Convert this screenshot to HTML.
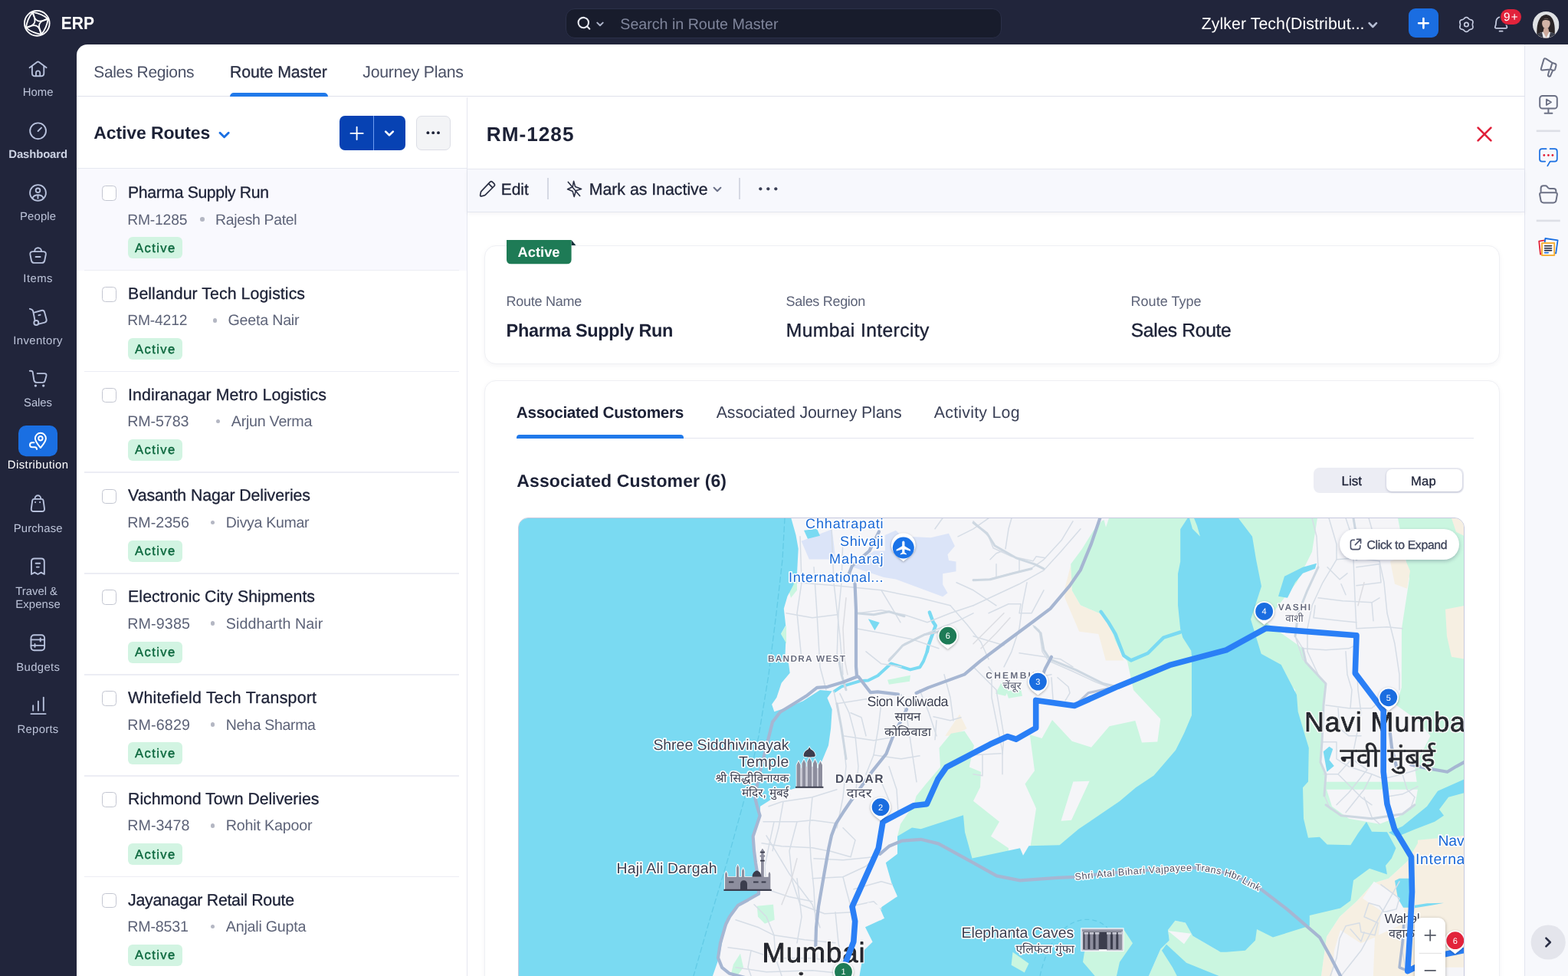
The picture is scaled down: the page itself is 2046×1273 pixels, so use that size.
<!DOCTYPE html>
<html lang="en"><head><meta charset="utf-8"><title>Route Master - ERP</title>
<style>
*{box-sizing:border-box;margin:0;padding:0}
html,body{width:2046px;height:1273px;overflow:hidden;background:#21253b}
body{position:relative;font-family:"Liberation Sans","Noto Sans CJK SC",sans-serif;-webkit-font-smoothing:antialiased}
.t{position:absolute;white-space:nowrap;line-height:1;display:block}
.a{position:absolute;display:block}
svg{position:absolute;display:block;overflow:visible}
.ic{fill:none;stroke:#b7c1dc;stroke-width:1.9;stroke-linecap:round;stroke-linejoin:round}
.ri{fill:none;stroke:#6c7185;stroke-width:2;stroke-linecap:round;stroke-linejoin:round}
.sep{position:absolute;height:1.8px;background:#ecedf4;left:109.8px;width:489.2px}
.cb{position:absolute;left:132.5px;width:19.5px;height:19.5px;border:1.5px solid #c3c6d1;border-radius:4.5px;background:#fff}
.bd{position:absolute;left:167px;width:70.5px;height:28.2px;border-radius:6px;background:#d2f4e2}
.dot{position:absolute;width:5.6px;height:5.6px;border-radius:50%;background:#b4b7c3}
</style></head>
<body>
<div class="a" style="left:99.6px;top:58px;width:1889.9px;height:1215px;background:#fff;border-top-left-radius:14px"></div>
<div class="a" style="left:1989px;top:58px;width:57px;height:1215px;background:#f7f8fc;border-left:1.5px solid #e3e5ef"></div>
<!-- top bar -->
<svg style="left:31px;top:12.5px" width="35" height="35" viewBox="31 12.5 35 35"><g fill="none" stroke="#fff" stroke-width="1.85" stroke-linecap="round">
<circle cx="48.3" cy="29.85" r="16.35"/>
<path d="M42.5 15.4 Q54.6 17.2 62.6 24.1 M42.5 15.4 C45.6 28.4 50.5 29.5 62.6 24.1"/>
<path transform="rotate(90 48.3 29.85)" d="M42.5 15.4 Q54.6 17.2 62.6 24.1 M42.5 15.4 C45.6 28.4 50.5 29.5 62.6 24.1"/>
<path transform="rotate(180 48.3 29.85)" d="M42.5 15.4 Q54.6 17.2 62.6 24.1 M42.5 15.4 C45.6 28.4 50.5 29.5 62.6 24.1"/>
<path transform="rotate(270 48.3 29.85)" d="M42.5 15.4 Q54.6 17.2 62.6 24.1 M42.5 15.4 C45.6 28.4 50.5 29.5 62.6 24.1"/>
</g></svg>

<div class="a" style="left:738px;top:10.5px;width:568.5px;height:39.5px;border-radius:12px;background:#181c2c;border:1px solid #2b3049"></div>
<svg style="left:751px;top:19px" width="40" height="24" viewBox="0 0 40 24"><g fill="none" stroke="#e8eaf2" stroke-width="2.1" stroke-linecap="round" stroke-linejoin="round">
<circle cx="10.3" cy="10.6" r="6.7"/><path d="M15.2 15.6 L18.3 18.7"/></g>
<path d="M28.3 10.6 L32 14.2 L35.7 10.6" fill="none" stroke="#aeb5cb" stroke-width="2" stroke-linecap="round" stroke-linejoin="round"/></svg>


<svg style="left:1784px;top:27px" width="15" height="12" viewBox="0 0 15 12"><path d="M2.6 3.2 L7.3 8 L12 3.2" fill="none" stroke="#b5bdd3" stroke-width="2.6" stroke-linecap="round" stroke-linejoin="round"/></svg>
<div class="a" style="left:1838px;top:10.5px;width:38.5px;height:38.5px;border-radius:9px;background:#1a6de1"></div>
<svg style="left:1838px;top:10.5px" width="38.5" height="38.5" viewBox="0 0 38.5 38.5"><path d="M19.4 13 V25.6 M13.1 19.3 H25.7" fill="none" stroke="#fff" stroke-width="2.6" stroke-linecap="round"/></svg>
<svg style="left:1900px;top:19px" width="27" height="27" viewBox="0 0 27 27"><g fill="none" stroke="#c5cbe0" stroke-width="1.7" stroke-linejoin="round">
<path d="M13.40 3.55 L13.89 3.60 L14.37 3.74 L14.83 3.97 L15.26 4.26 L15.65 4.60 L16.02 4.95 L16.36 5.29 L16.69 5.61 L17.03 5.88 L17.38 6.12 L17.75 6.30 L18.16 6.45 L18.60 6.58 L19.07 6.71 L19.55 6.85 L20.04 7.02 L20.50 7.25 L20.93 7.53 L21.29 7.87 L21.58 8.28 L21.79 8.73 L21.90 9.21 L21.93 9.72 L21.89 10.24 L21.80 10.75 L21.68 11.24 L21.56 11.71 L21.45 12.15 L21.38 12.58 L21.35 13.00 L21.38 13.42 L21.45 13.85 L21.56 14.29 L21.68 14.76 L21.80 15.25 L21.89 15.76 L21.93 16.28 L21.90 16.79 L21.79 17.27 L21.58 17.72 L21.29 18.13 L20.93 18.47 L20.50 18.75 L20.04 18.98 L19.55 19.15 L19.07 19.29 L18.60 19.42 L18.16 19.55 L17.75 19.70 L17.38 19.88 L17.03 20.12 L16.69 20.39 L16.36 20.71 L16.02 21.05 L15.65 21.40 L15.26 21.74 L14.83 22.03 L14.37 22.26 L13.89 22.40 L13.40 22.45 L12.91 22.40 L12.43 22.26 L11.97 22.03 L11.54 21.74 L11.15 21.40 L10.78 21.05 L10.44 20.71 L10.11 20.39 L9.77 20.12 L9.43 19.88 L9.05 19.70 L8.64 19.55 L8.20 19.42 L7.73 19.29 L7.25 19.15 L6.76 18.98 L6.30 18.75 L5.87 18.47 L5.51 18.13 L5.22 17.73 L5.01 17.27 L4.90 16.79 L4.87 16.28 L4.91 15.76 L5.00 15.25 L5.12 14.76 L5.24 14.29 L5.35 13.85 L5.42 13.42 L5.45 13.00 L5.42 12.58 L5.35 12.15 L5.24 11.71 L5.12 11.24 L5.00 10.75 L4.91 10.24 L4.87 9.72 L4.90 9.21 L5.01 8.73 L5.22 8.27 L5.51 7.87 L5.87 7.53 L6.30 7.25 L6.76 7.02 L7.25 6.85 L7.73 6.71 L8.20 6.58 L8.64 6.45 L9.05 6.30 L9.43 6.12 L9.77 5.88 L10.11 5.61 L10.44 5.29 L10.78 4.95 L11.15 4.60 L11.54 4.26 L11.97 3.97 L12.43 3.74 L12.91 3.60 Z"/>
<circle cx="13.4" cy="13.0" r="2.7"/></g></svg>
<svg style="left:1945px;top:18px" width="26" height="28" viewBox="1945 18 26 28"><g fill="none" stroke="#c5cbe0" stroke-width="1.8" stroke-linecap="round" stroke-linejoin="round">
<path d="M1952.6 36.8 Q1950.2 36.8 1951 34.6 C1952.2 32.6 1952 30 1952.2 28 C1952.6 24.6 1955 22.2 1958.6 22.2 C1962.2 22.2 1964.6 24.6 1965 28 C1965.2 30 1965 32.6 1966.2 34.6 Q1967 36.8 1964.6 36.8 Z"/>
<path d="M1956.6 40.7 H1960.6"/></g></svg>
<div class="a" style="left:1956.6px;top:10.8px;width:29.6px;height:22.4px;border-radius:11.2px;background:#e2233b;border:1.2px solid #21253b"></div>

<svg style="left:2000px;top:14.5px" width="34.5" height="34.5" viewBox="0 0 34.5 34.5"><defs><clipPath id="av"><circle cx="17.25" cy="17.25" r="17.25"/></clipPath></defs>
<g clip-path="url(#av)"><rect width="34.5" height="34.5" fill="#dfe1e4"/>
<path d="M6 36 C4 22 6 5 17.5 4 C29 5 30 22 28 36 Z" fill="#2a2426"/>
<ellipse cx="17.4" cy="15.5" rx="5.3" ry="6.8" fill="#d2b3a6"/>
<path d="M11.6 13 C12.5 8 22 7.5 23.2 13.5 C21 10.5 15 10 11.6 13Z" fill="#2a2426"/>
<path d="M14.6 21.5 L20.2 21.5 L21.5 27 L27 29.5 L28 36 L7 36 L8 29.5 L13.4 27Z" fill="#cdaa9c"/>
<path d="M5 36 L7.5 28.5 L13.5 26.5 L17.5 34 L21.5 26.5 L27.5 28.5 L30 36Z" fill="#e9e9ec"/>
<path d="M4 36 L7 28.5 L12 27 L14 36Z M31 36 L28 28.5 L23 27 L21 36Z" fill="#3a3d4a"/>
</g></svg>
<!-- left nav -->
<svg style="left:0;top:58px" width="100" height="1215" viewBox="0 58 100 1215">
<rect x="24" y="555" width="51" height="40.2" rx="10" fill="#1a6fe2"/>
<g class="ic">
<path d="M38.6 88.3 L48.3 81 Q49.6 80 50.9 81 L60.6 88.3"/>
<path d="M41.9 86.3 V95.4 Q41.9 99.2 45.7 99.2 H53.5 Q57.3 99.2 57.3 95.4 V86.3"/>
<path d="M47 99 V95 A2.6 2.6 0 0 1 52.2 95 V99"/>
<circle cx="49.6" cy="170.8" r="10.4"/><path d="M49.6 171 L54 166.6"/>
<circle cx="49.5" cy="251.5" r="10.4"/><circle cx="49.5" cy="248.3" r="2.8"/>
<path d="M42.4 258.6 C43.5 255.2 46 254.2 49.5 254.2 C53 254.2 55.5 255.2 56.6 258.6 M49.5 254.6 V258.8"/>
<path d="M45.2 327.6 A4.4 4.4 0 0 1 54 327.6"/>
<path d="M43 328.1 H56.2 Q60.4 328.1 59.8 332 L58.2 340 Q57.6 342.9 54.6 342.9 H44.6 Q41.6 342.9 41 340 L39.4 332 Q38.8 328.1 43 328.1 Z"/>
<path d="M46.6 335 H52.6"/>
<path d="M38.9 402.8 L41.2 403.6 Q42.8 404.2 43.2 406 L45.6 418.2"/>
<circle cx="47.3" cy="421" r="3"/>
<path d="M44.6 407.6 L54 405 Q57.2 404.2 58.1 407.3 L60.6 416.6 Q61.4 419.7 58.3 420.6 L50.4 422.6"/>
<path d="M50.4 411.2 L52.6 410.6"/>
<path d="M38.8 483.8 H40.6 Q42.4 483.8 42.8 485.8 L44.4 496 Q45 498.9 48 498.9 H55.6 Q58.2 498.9 58.7 496.4 L60.4 490.4 Q61.2 487.1 57.8 487.1 H48.6"/>
<circle cx="46.4" cy="503.1" r="0.9" stroke-width="1.6"/><circle cx="56.7" cy="503.1" r="0.9" stroke-width="1.6"/>
<path d="M45.6 650.6 V650 A3.8 3.8 0 0 1 53.2 650 V650.6"/>
<path d="M44.8 650.9 H54 Q56.3 650.9 56.6 653.2 L58 663.4 Q58.4 667 54.8 667 H44 Q40.4 667 40.8 663.4 L42.2 653.2 Q42.5 650.9 44.8 650.9 Z"/>
<path d="M46.1 655 V655.1 M52.1 655 V655.1" stroke-width="2.1"/>
<path d="M41 749 V732.5 Q41 728.5 45 728.5 H53.8 Q57.8 728.5 57.8 732.5 V749 L53.6 746.6 L49.4 749 L45.2 746.6 Z"/>
<path d="M46.6 734.8 H52.2 M47.8 739.6 H50.8"/>
<rect x="40.5" y="828.2" width="17.6" height="20.1" rx="4"/>
<path d="M40.5 834.4 H58.1 M40.5 841.9 H58.1 M52.7 832.5 V836.4 M45.5 840 V843.9"/>
<path d="M43.2 920.2 V926.8 M49.9 914.8 V926.8 M56.8 909.6 V926.8 M40.4 931.1 H59.6"/>
</g>
<g fill="none" stroke="#fff" stroke-width="2" stroke-linecap="round" stroke-linejoin="round">
<path d="M52.9 584 C50 580.5 45.9 576 45.9 571.8 A7 7 0 0 1 59.9 571.8 C59.9 576 55.8 580.5 52.9 584 Z"/>
<circle cx="52.9" cy="571.8" r="2.7"/>
<path d="M44.4 577.2 H42 A3 3 0 0 0 42 583.2 H45.4 Q48 583.2 48 586"/>
</g></svg>












<!-- module tabs -->
<div class="a" style="left:99.5px;top:124.6px;width:1890px;height:1.6px;background:#dfe1ec"></div>



<div class="a" style="left:299.5px;top:120.6px;width:128px;height:5.4px;background:#2079ea;border-radius:5px 5px 0 0"></div>
<!-- list pane -->
<div class="a" style="left:99.5px;top:220.4px;width:509.8px;height:132.4px;background:#f9f9fe"></div>
<div class="a" style="left:99.5px;top:218.9px;width:509.8px;height:1.5px;background:#e6e8f0"></div>
<div class="a" style="left:608.6px;top:127.4px;width:1.6px;height:1146px;background:#e5e7f0"></div>

<svg style="left:283px;top:168px" width="20" height="16" viewBox="0 0 20 16"><path d="M4 5.2 L9.6 10.8 L15.2 5.2" fill="none" stroke="#1a6fe2" stroke-width="2.9" stroke-linecap="round" stroke-linejoin="round"/></svg>
<div class="a" style="left:442.5px;top:150.5px;width:86px;height:45.8px;border-radius:7px;background:#0742b3"></div>
<div class="a" style="left:486.6px;top:150.5px;width:1.2px;height:45.8px;background:#6f9cf0"></div>
<svg style="left:442.5px;top:150.5px" width="86" height="46" viewBox="0 0 86 46"><g fill="none" stroke="#fff" stroke-linecap="round" stroke-linejoin="round"><path d="M22.6 14.8 V31 M14.5 22.9 H30.7" stroke-width="1.9"/><path d="M60.2 20.6 L65 25.4 L69.8 20.6" stroke-width="2.6"/></g></svg>
<div class="a" style="left:543px;top:151px;width:44.6px;height:44.6px;border-radius:7px;background:#f3f4f6;border:1.2px solid #dcdee6"></div>
<svg style="left:543px;top:151px" width="45" height="45" viewBox="0 0 45 45"><g fill="#1c2136"><circle cx="15.4" cy="22.2" r="1.9"/><circle cx="22.2" cy="22.2" r="1.9"/><circle cx="29" cy="22.2" r="1.9"/></g></svg>
<div class="cb" style="top:242.20px"></div><div class="dot" style="left:260.95px;top:283.10px"></div><div class="bd" style="top:309.30px"></div><div class="sep" style="top:351.70px"></div>
<div class="cb" style="top:374.02px"></div><div class="dot" style="left:277.70px;top:414.92px"></div><div class="bd" style="top:441.12px"></div><div class="sep" style="top:483.52px"></div>
<div class="cb" style="top:505.84px"></div><div class="dot" style="left:281.70px;top:546.74px"></div><div class="bd" style="top:572.94px"></div><div class="sep" style="top:615.34px"></div>
<div class="cb" style="top:637.66px"></div><div class="dot" style="left:274.70px;top:678.56px"></div><div class="bd" style="top:704.76px"></div><div class="sep" style="top:747.16px"></div>
<div class="cb" style="top:769.48px"></div><div class="dot" style="left:274.70px;top:810.38px"></div><div class="bd" style="top:836.58px"></div><div class="sep" style="top:878.98px"></div>
<div class="cb" style="top:901.30px"></div><div class="dot" style="left:274.70px;top:942.20px"></div><div class="bd" style="top:968.40px"></div><div class="sep" style="top:1010.80px"></div>
<div class="cb" style="top:1033.12px"></div><div class="dot" style="left:274.70px;top:1074.02px"></div><div class="bd" style="top:1100.22px"></div><div class="sep" style="top:1142.62px"></div>
<div class="cb" style="top:1164.94px"></div><div class="dot" style="left:274.70px;top:1205.84px"></div><div class="bd" style="top:1232.04px"></div>
<!-- detail header -->

<svg style="left:1925px;top:162.5px" width="24" height="24" viewBox="0 0 24 24"><path d="M3.6 3.6 L20.4 20.4 M20.4 3.6 L3.6 20.4" fill="none" stroke="#e0213a" stroke-width="2.7" stroke-linecap="round"/></svg>
<div class="a" style="left:610.2px;top:220.2px;width:1378.8px;height:56.8px;background:#f7f8fd;border-top:1.5px solid #e6e8f0;border-bottom:1.5px solid #e4e6ef;box-shadow:0 2px 5px rgba(30,40,80,0.05)"></div>
<svg style="left:624px;top:234px" width="24" height="24" viewBox="0 0 24 24"><g fill="none" stroke="#2a2f44" stroke-width="1.7" stroke-linecap="round" stroke-linejoin="round"><path d="M15.2 3.6 Q17 1.8 18.8 3.6 L20.6 5.4 Q22.4 7.2 20.6 9 L9.4 20.2 Q8.6 21 7.4 21.2 L4.2 21.8 Q2.4 22.1 2.7 20.3 L3.3 17.1 Q3.5 15.9 4.3 15.1 Z"/><path d="M13.6 5.6 L18.6 10.6"/></g></svg>

<div class="a" style="left:714.4px;top:232px;width:1.5px;height:28.4px;background:#d5d8e3"></div>
<svg style="left:738px;top:234px" width="24" height="26" viewBox="0 0 24 26"><g fill="none" stroke="#2a2f44" stroke-width="1.6" stroke-linecap="round" stroke-linejoin="round"><path d="M10.6 2.4 L12.6 9.6 L20.6 12.4 L13.2 14.8 L13.4 15 L11.2 22.6 L9.2 15.6 L2.6 12.8 L9.2 9.8 Z"/><path d="M3.4 3.4 L18.6 21.4"/></g></svg>

<svg style="left:929px;top:241px" width="14" height="12" viewBox="0 0 14 12"><path d="M2.6 3.8 L7 8.2 L11.4 3.8" fill="none" stroke="#6a7088" stroke-width="2" stroke-linecap="round" stroke-linejoin="round"/></svg>
<div class="a" style="left:964.4px;top:232px;width:1.5px;height:28.4px;background:#d5d8e3"></div>
<svg style="left:988px;top:242px" width="30" height="9" viewBox="0 0 30 9"><g fill="#3a3f55"><circle cx="4.3" cy="4.3" r="2.1"/><circle cx="14.3" cy="4.3" r="2.1"/><circle cx="24.3" cy="4.3" r="2.1"/></g></svg>
<div class="a" style="left:631.5px;top:319.6px;width:1325.4px;height:155.4px;border-radius:15px;background:#fff;border:1.5px solid #eff0f4;box-shadow:0 2px 6px rgba(30,40,80,0.05)"></div>
<svg style="left:661px;top:313px" width="92" height="32" viewBox="0 0 92 32"><path d="M84.6 0 L90.4 7 H84.6 Z" fill="#15313a"/><path d="M0 0 H84.6 V25.4 Q84.6 31.2 78.8 31.2 H5.8 Q0 31.2 0 25.4 Z" fill="#1e7b56"/></svg>







<div class="a" style="left:631.5px;top:495.8px;width:1325.4px;height:820px;border-radius:15px;background:#fff;border:1.5px solid #eff0f4;box-shadow:0 2px 6px rgba(30,40,80,0.05)"></div>
<div class="a" style="left:673.5px;top:570.5px;width:1249px;height:1.6px;background:#e3e5ef"></div>
<div class="a" style="left:673.5px;top:567.4px;width:218.6px;height:4.8px;background:#2079ea;border-radius:4px 4px 0 0"></div>




<div class="a" style="left:1714px;top:610px;width:196.4px;height:33.2px;border-radius:8px;background:#ecedf4"></div>
<div class="a" style="left:1809px;top:612.4px;width:99.4px;height:28.8px;border-radius:7px;background:#fff;box-shadow:0 1px 3px rgba(30,40,90,0.25)"></div>


<!-- map -->
<div class="a" style="left:676.2px;top:675.4000000000001px;width:1235.0px;height:640px;border-radius:13px;background:#f5f5f8;border:1.2px solid #c6c9de;overflow:hidden">
<svg style="left:-0.4px;top:-0.4px;will-change:transform;text-rendering:geometricPrecision" width="1233.4" height="640" viewBox="677.0 676.2 1233.4 640">
<polygon points="1397.2,737.5 1389.4,767.4 1389.4,780.0 1408.2,824.0 1433.4,827.1 1442.8,861.6 1466.4,861.6 1455.4,836.5 1447.5,814.5 1435.0,800.4 1409.8,789.4 1398.8,770.5" fill="#f6efe2" />
<polygon points="1233.3,960.0 1252.2,931.7 1261.6,950.5 1242.8,960.0" fill="#f6efe2" />
<polygon points="1836.0,1098.0 1912.0,1086.0 1912.0,1320.0 1722.0,1320.0 1724.0,1273.0 1731.0,1222.0 1748.0,1196.0 1770.0,1176.0 1792.0,1152.0 1812.0,1146.0 1836.0,1124.0" fill="#f6efe2" />
<polygon points="1447.5,676.0 1560.0,676.0 1560.0,1110.0 1340.0,1110.0 1344.5,1104.5 1352.0,1054.8 1350.0,1050.0 1337.5,1022.8 1350.0,1005.5 1343.8,958.4 1359.5,963.1 1373.0,939.2 1398.8,967.0 1424.0,975.0 1447.5,947.4 1481.3,940.3 1490.0,968.6 1510.3,967.8 1514.3,938.0 1479.0,900.3 1471.0,862.6 1464.8,855.4 1455.4,836.5 1447.5,814.5 1435.0,800.4 1409.8,789.4 1398.8,770.5 1397.2,736.0 1411.4,717.0 1427.0,692.0 1438.0,679.4" fill="#caf6e0" />
<polygon points="1400.4,1019.6 1421.6,1018.9 1398.0,1070.0 1384.5,1071.0" fill="#f5f5f8" />
<polygon points="1440.0,676.0 1447.0,676.0 1443.0,688.0" fill="#f5f5f8" />
<polygon points="1241.0,957.0 1258.5,953.7 1271.0,972.5 1264.7,1000.8 1280.0,1007.0 1279.0,1027.0 1270.0,1045.0 1304.0,1072.0 1293.0,1091.0 1316.0,1106.4 1316.0,1125.0 1171.0,1125.0 1171.0,1091.0 1175.0,1075.0 1192.5,1049.5 1195.6,1038.5 1208.2,1022.8 1227.0,1000.8 1225.5,975.7" fill="#caf6e0" />
<polygon points="1158.0,887.0 1188.0,881.0 1187.0,889.0 1160.0,893.0" fill="#caf6e0" />
<polygon points="1610.0,676.0 1719.0,676.0 1712.0,720.0 1692.0,760.0 1668.0,790.0 1652.0,812.0 1700.0,846.0 1704.7,864.0 1729.8,892.4 1727.4,920.7 1725.0,967.8 1723.5,994.5 1729.8,1010.2 1728.2,1038.5 1733.0,1050.0 1733.0,1110.0 1690.0,1110.0 1690.0,900.0 1640.0,850.0 1610.0,800.0" fill="#caf6e0" />
<polygon points="1824.0,676.0 1912.0,676.0 1912.0,1090.0 1860.0,1090.0 1840.0,1062.0 1850.0,1030.0 1846.0,1000.0 1866.5,960.0 1850.0,940.0 1822.0,920.0 1828.8,897.0 1829.0,820.0 1839.0,755.0" fill="#caf6e0" />
<polygon points="1814.0,732.0 1832.0,726.0 1840.0,745.0 1836.0,768.0 1820.0,762.0" fill="#f6efe2" />
<polygon points="1886.0,795.0 1912.0,790.0 1912.0,860.0 1894.0,857.0 1888.0,830.0" fill="#f6efe2" />
<polygon points="1894.0,676.0 1912.0,676.0 1912.0,700.0 1900.0,694.0" fill="#f6efe2" />
<polygon points="1690.0,1020.0 1850.0,1020.0 1850.0,1100.0 1836.0,1124.0 1812.0,1146.0 1792.0,1152.0 1770.0,1176.0 1748.0,1196.0 1731.0,1222.0 1724.0,1273.0 1722.0,1320.0 1590.0,1320.0 1590.0,1030.0" fill="#caf6e0" />
<polygon points="1731.0,1030.0 1850.0,1030.0 1846.0,1052.0 1824.0,1066.0 1800.0,1075.0 1760.0,1068.0 1738.0,1052.0" fill="#f5f5f8" />
<polygon points="1840.0,1062.0 1912.0,1020.0 1912.0,1090.0 1850.0,1096.0" fill="#caf6e0" />
<polygon points="1792.8,1150.0 1827.0,1171.0 1831.0,1182.7 1836.8,1202.0 1833.0,1320.0 1733.6,1320.0 1741.0,1240.0 1749.0,1213.3 1775.6,1230.5 1798.6,1221.0 1802.4,1188.5 1778.0,1172.0" fill="#f5f5f8" />
<polygon points="1794.0,1222.0 1834.0,1204.0 1834.0,1320.0 1790.0,1320.0" fill="#f6efe2" />
<polygon points="1846.0,1262.0 1912.0,1262.0 1912.0,1320.0 1846.0,1320.0" fill="#f5f5f8" />
<polygon points="1524.0,1213.3 1533.5,1200.9 1546.8,1203.7 1556.4,1221.0 1592.6,1242.0 1627.0,1238.0 1642.3,1211.4 1660.0,1221.0 1700.0,1230.0 1700.0,1320.0 1490.0,1320.0 1499.0,1273.0 1514.4,1238.0 1525.8,1226.6" fill="#caf6e0" />
<polygon points="987.8,1182.0 1009.0,1180.0 1010.7,1200.0 998.0,1205.0 989.0,1196.0" fill="#caf6e0" />
<polygon points="957.0,1258.0 966.0,1244.0 970.0,1262.0 962.0,1273.0 954.0,1270.0" fill="#caf6e0" />
<polygon points="1299.0,905.0 1308.0,888.0 1316.0,900.0 1312.0,908.0" fill="#caf6e0" />
<polygon points="1313.0,902.0 1332.0,899.0 1334.0,908.0 1316.0,911.0" fill="#caf6e0" />
<polygon points="1027.0,763.0 1040.0,748.0 1040.0,770.0 1032.0,780.0" fill="#caf6e0" />
<polygon points="1018.0,828.0 1026.0,816.0 1026.0,840.0" fill="#caf6e0" />
<polygon points="1045.6,706.0 1085.7,690.4 1090.4,729.7 1055.8,729.7" fill="#dbe4f8" />
<polygon points="1154.8,698.3 1168.9,692.0 1176.8,699.8 1214.5,701.4 1238.0,695.9 1245.9,712.4 1236.5,723.4 1238.0,731.3 1247.5,732.8 1247.5,745.4 1230.2,748.5 1230.2,762.7 1236.5,773.7 1230.2,778.4 1168.9,755.6 1153.2,753.3 1110.8,739.1 1140.6,718.7 1154.8,718.7" fill="#dbe4f8" />
<polygon points="660.0,660.0 1032.3,660.0 1032.3,676.0 1038.5,698.0 1041.7,716.0 1040.0,748.0 1035.4,763.0 1027.5,778.0 1022.8,794.0 1025.2,816.0 1018.9,827.0 1025.2,838.0 1024.4,858.0 1029.1,866.0 1030.7,878.0 1019.7,891.0 1013.4,910.0 1007.1,919.0 1010.3,928.5 1030.0,922.0 1048.0,914.4 1070.0,900.3 1085.7,901.8 1079.4,910.5 1085.7,925.4 1084.1,950.5 1081.0,972.5 1073.1,991.4 1066.0,1008.0 1045.0,1026.0 1020.0,1034.0 1003.0,1045.0 992.0,1052.0 991.6,1064.4 982.1,1091.1 985.9,1125.5 991.6,1167.5 963.0,1180.8 947.7,1201.8 938.2,1249.5 930.0,1273.0 924.0,1320.0 660.0,1320.0" fill="#7adaf2" />
<polygon points="1171.0,1091.0 1190.0,1079.6 1201.6,1081.5 1257.0,1063.4 1259.0,1085.4 1268.5,1119.7 1331.0,1106.4 1335.0,1116.0 1342.5,1103.5 1382.6,1102.5 1407.5,1081.5 1461.0,1045.3 1482.0,1027.5 1505.6,1011.8 1534.0,978.8 1545.0,956.8 1555.0,933.3 1555.0,856.0 1554.3,849.0 1543.3,831.8 1540.2,820.8 1537.0,789.4 1537.0,748.5 1540.2,732.8 1540.2,690.4 1549.6,676.0 1549.6,660.0 1616.5,660.0 1616.5,677.0 1634.0,700.0 1639.0,730.0 1646.0,765.0 1632.0,808.0 1645.7,853.0 1671.7,867.3 1692.0,906.5 1693.7,928.5 1703.0,960.0 1707.8,975.7 1707.0,1019.6 1700.0,1027.5 1701.0,1068.0 1707.0,1093.0 1722.0,1092.0 1731.7,1101.6 1762.3,1102.5 1772.0,1087.3 1783.0,1072.0 1790.0,1085.0 1810.0,1085.4 1821.5,1106.4 1815.8,1119.7 1808.0,1129.3 1810.0,1140.7 1787.0,1133.0 1766.0,1148.4 1762.3,1175.0 1749.0,1184.7 1708.8,1194.2 1708.8,1207.6 1661.0,1222.8 1640.0,1212.3 1638.0,1226.7 1624.8,1240.0 1600.0,1242.0 1592.6,1242.0 1556.4,1221.0 1546.8,1203.7 1533.5,1200.9 1524.0,1213.3 1525.8,1226.6 1514.4,1238.0 1499.0,1273.0 1490.0,1320.0 1115.0,1320.0 1121.5,1273.0 1127.2,1240.0 1138.6,1228.6 1129.0,1209.5 1154.0,1198.0 1148.2,1184.6 1171.0,1169.4 1163.5,1152.2 1155.8,1125.5 1171.0,1114.0" fill="#7adaf2" />
<polygon points="1413.0,1255.0 1415.0,1242.0 1440.0,1222.0 1466.6,1213.0 1478.0,1230.5 1461.0,1255.0 1457.0,1273.0 1452.0,1320.0 1426.0,1320.0 1428.5,1273.0" fill="#caf6e0" />
<polygon points="1321.5,1242.0 1342.5,1257.0 1336.8,1268.6 1319.6,1259.0" fill="#caf6e0" />
<polygon points="1524.0,1214.2 1554.5,1218.0 1545.0,1231.4" fill="#f5f5f8" />
<polygon points="1516.0,1240.0 1522.0,1232.0 1548.0,1256.0 1590.0,1273.0 1600.0,1320.0 1560.0,1320.0 1530.0,1262.0" fill="#7adaf2" />
<polyline points="1540.2,824.7 1518.2,831.8 1497.8,852.2 1475.8,861.6 1466.4,855.4 1455.4,827.1 1446.0,811.4 1436.5,798.0" fill="none" stroke="#7adaf2" stroke-width="4.5" stroke-linejoin="round" stroke-linecap="round" />
<polyline points="1209.8,850.0 1205.0,862.6 1200.3,870.4 1187.8,873.6 1162.6,865.7 1145.4,881.4 1132.8,887.7 1121.8,888.5 1098.2,895.6 1088.8,901.8" fill="none" stroke="#7adaf2" stroke-width="4" stroke-linejoin="round" stroke-linecap="round" />
<polyline points="1212.9,798.8 1217.6,811.4 1220.8,816.1 1211.3,842.8 1209.8,850.0" fill="none" stroke="#7adaf2" stroke-width="4.5" stroke-linejoin="round" stroke-linecap="round" />
<polygon points="1132.8,807.4 1147.7,812.2 1141.4,822.4" fill="#7adaf2" />
<polygon points="1049.0,692.0 1066.0,690.0 1070.0,699.0 1054.0,703.0" fill="#7adaf2" />
<polygon points="1726.7,980.4 1734.5,974.0 1739.2,977.2 1734.5,991.4 1740.8,999.2 1731.4,1007.0" fill="#7adaf2" />
<polygon points="1668.0,778.0 1676.0,752.0 1700.0,740.0 1718.0,735.0 1716.0,742.0 1700.0,748.0 1690.0,760.0 1680.0,780.0" fill="#7adaf2" />
<polygon points="1552.0,676.0 1556.0,690.0 1566.0,700.0 1562.0,686.0 1558.0,676.0" fill="#caf6e0" />
<polygon points="1912.0,1016.0 1876.0,1032.0 1862.0,1052.0 1830.0,1078.0 1812.0,1086.0 1822.0,1092.0 1846.0,1082.0 1872.0,1072.0 1884.0,1064.0 1878.0,1056.0 1890.0,1040.0 1912.0,1034.0" fill="#7adaf2" />
<polygon points="1846.0,1181.0 1862.0,1178.4 1884.0,1178.0 1868.0,1181.0 1846.0,1184.4" fill="#7adaf2" />
<polygon points="1820.0,1149.0 1826.0,1146.0 1840.0,1146.0 1841.0,1184.0 1831.0,1184.0 1824.0,1172.0" fill="#7adaf2" />
<polyline points="1024.0,676.0 1021.0,730.0 1013.0,800.0 1003.0,880.0 990.0,960.0 972.0,1040.0 950.0,1120.0 926.0,1200.0 905.0,1273.0" fill="none" stroke="#63cbe6" stroke-width="1.3" stroke-linejoin="round" stroke-linecap="round" stroke-dasharray="7 4"/>
<path d="M1357 1273 C1370 1215 1400 1196 1425 1200 C1436 1202 1442 1207 1446 1212" fill="none" stroke="#63cbe6" stroke-width="1.2" stroke-dasharray="6 4"/>
<polyline points="1044.0,700.0 1046.0,760.0 1040.0,800.0 1046.0,860.0" fill="none" stroke="#d6dde6" stroke-width="1.5" stroke-linejoin="round" stroke-linecap="round" />
<polyline points="1062.0,740.0 1066.0,800.0 1070.0,870.0 1078.0,900.0" fill="none" stroke="#d6dde6" stroke-width="1.5" stroke-linejoin="round" stroke-linecap="round" />
<polyline points="1085.0,690.0 1088.0,760.0 1096.0,830.0 1100.0,880.0" fill="none" stroke="#d6dde6" stroke-width="1.5" stroke-linejoin="round" stroke-linecap="round" />
<polyline points="1100.0,700.0 1098.0,760.0 1094.0,800.0 1092.0,860.0" fill="none" stroke="#d6dde6" stroke-width="1.5" stroke-linejoin="round" stroke-linecap="round" />
<polyline points="1026.0,800.0 1060.0,806.0 1092.0,802.0" fill="none" stroke="#d6dde6" stroke-width="1.5" stroke-linejoin="round" stroke-linecap="round" />
<polyline points="1040.0,760.0 1090.0,764.0 1150.0,770.0 1200.0,780.0 1240.0,790.0" fill="none" stroke="#d6dde6" stroke-width="1.5" stroke-linejoin="round" stroke-linecap="round" />
<polyline points="1120.0,800.0 1150.0,796.0 1180.0,802.0 1210.0,812.0 1240.0,800.0 1270.0,790.0" fill="none" stroke="#d6dde6" stroke-width="1.5" stroke-linejoin="round" stroke-linecap="round" />
<polyline points="1150.0,770.0 1165.0,795.0 1175.0,812.0" fill="none" stroke="#d6dde6" stroke-width="1.5" stroke-linejoin="round" stroke-linecap="round" />
<polyline points="1117.0,820.0 1150.0,826.0 1190.0,834.0 1225.0,846.0" fill="none" stroke="#d6dde6" stroke-width="1.5" stroke-linejoin="round" stroke-linecap="round" />
<polyline points="1160.0,860.0 1180.0,840.0 1210.0,826.0 1250.0,810.0 1270.0,800.0" fill="none" stroke="#d6dde6" stroke-width="1.5" stroke-linejoin="round" stroke-linecap="round" />
<polyline points="1130.0,850.0 1150.0,866.0 1176.0,870.0" fill="none" stroke="#d6dde6" stroke-width="1.5" stroke-linejoin="round" stroke-linecap="round" />
<polyline points="1240.0,790.0 1262.0,815.0 1280.0,838.0 1290.0,860.0" fill="none" stroke="#d6dde6" stroke-width="1.5" stroke-linejoin="round" stroke-linecap="round" />
<polyline points="1220.0,690.0 1230.0,676.0" fill="none" stroke="#d6dde6" stroke-width="1.5" stroke-linejoin="round" stroke-linecap="round" />
<polyline points="1250.0,700.0 1270.0,690.0 1290.0,676.0" fill="none" stroke="#d6dde6" stroke-width="1.5" stroke-linejoin="round" stroke-linecap="round" />
<polyline points="1248.0,760.0 1270.0,770.0 1300.0,790.0" fill="none" stroke="#d6dde6" stroke-width="1.5" stroke-linejoin="round" stroke-linecap="round" />
<polyline points="1270.0,680.0 1290.0,700.0 1296.0,715.0 1320.0,726.0 1348.0,732.0 1352.0,726.0 1364.0,728.0" fill="none" stroke="#d6dde6" stroke-width="1.5" stroke-linejoin="round" stroke-linecap="round" />
<polyline points="1270.0,756.0 1290.0,756.0 1320.0,748.0 1345.0,742.0 1362.0,730.0 1385.0,705.0 1400.0,680.0" fill="none" stroke="#d6dde6" stroke-width="1.5" stroke-linejoin="round" stroke-linecap="round" />
<polyline points="1312.0,716.0 1316.0,690.0 1320.0,676.0" fill="none" stroke="#d6dde6" stroke-width="1.5" stroke-linejoin="round" stroke-linecap="round" />
<polyline points="1292.0,730.0 1300.0,722.0 1310.0,718.0" fill="none" stroke="#d6dde6" stroke-width="1.5" stroke-linejoin="round" stroke-linecap="round" />
<polyline points="1300.0,736.0 1300.0,752.0" fill="none" stroke="#d6dde6" stroke-width="1.5" stroke-linejoin="round" stroke-linecap="round" />
<polyline points="1330.0,730.0 1330.0,746.0" fill="none" stroke="#d6dde6" stroke-width="1.5" stroke-linejoin="round" stroke-linecap="round" />
<polyline points="1340.0,760.0 1334.0,790.0 1330.0,820.0 1320.0,850.0 1310.0,870.0" fill="none" stroke="#d6dde6" stroke-width="1.5" stroke-linejoin="round" stroke-linecap="round" />
<polyline points="1270.0,790.0 1300.0,776.0 1330.0,762.0 1362.0,744.0 1384.0,720.0 1410.0,690.0" fill="none" stroke="#d6dde6" stroke-width="1.5" stroke-linejoin="round" stroke-linecap="round" />
<polyline points="1290.0,800.0 1316.0,788.0 1332.0,788.0 1330.0,800.0 1346.0,800.0 1362.0,770.0" fill="none" stroke="#d6dde6" stroke-width="1.5" stroke-linejoin="round" stroke-linecap="round" />
<polyline points="1270.0,830.0 1290.0,836.0 1310.0,842.0" fill="none" stroke="#d6dde6" stroke-width="1.5" stroke-linejoin="round" stroke-linecap="round" />
<polyline points="1348.0,816.0 1356.0,822.0 1360.0,850.0 1368.0,862.0 1400.0,876.0 1430.0,890.0 1446.0,896.0" fill="none" stroke="#d6dde6" stroke-width="1.5" stroke-linejoin="round" stroke-linecap="round" />
<polyline points="1290.0,870.0 1300.0,884.0 1352.0,884.0 1372.0,880.0" fill="none" stroke="#d6dde6" stroke-width="1.5" stroke-linejoin="round" stroke-linecap="round" />
<polyline points="1294.0,880.0 1294.0,910.0 1300.0,940.0 1308.0,980.0 1308.0,1010.0" fill="none" stroke="#d6dde6" stroke-width="1.5" stroke-linejoin="round" stroke-linecap="round" />
<polyline points="1270.0,985.0 1306.0,983.0" fill="none" stroke="#d6dde6" stroke-width="1.5" stroke-linejoin="round" stroke-linecap="round" />
<polyline points="1270.0,1010.0 1282.0,1012.0 1282.0,985.0" fill="none" stroke="#d6dde6" stroke-width="1.5" stroke-linejoin="round" stroke-linecap="round" />
<polyline points="1372.0,884.0 1374.0,912.0" fill="none" stroke="#d6dde6" stroke-width="1.5" stroke-linejoin="round" stroke-linecap="round" />
<polyline points="1380.0,884.0 1394.0,896.0 1396.0,904.0 1390.0,914.0" fill="none" stroke="#d6dde6" stroke-width="1.5" stroke-linejoin="round" stroke-linecap="round" />
<polyline points="1330.0,852.0 1384.0,860.0 1400.0,870.0" fill="none" stroke="#d6dde6" stroke-width="1.5" stroke-linejoin="round" stroke-linecap="round" />
<polyline points="1270.0,870.0 1300.0,900.0 1310.0,960.0 1308.0,984.0" fill="none" stroke="#d6dde6" stroke-width="1.5" stroke-linejoin="round" stroke-linecap="round" />
<polyline points="1088.0,902.0 1094.0,930.0 1100.0,960.0 1104.0,1000.0 1100.0,1040.0 1092.0,1080.0" fill="none" stroke="#d6dde6" stroke-width="1.5" stroke-linejoin="round" stroke-linecap="round" />
<polyline points="1096.0,905.0 1108.0,930.0 1116.0,960.0 1120.0,1000.0 1116.0,1040.0" fill="none" stroke="#d6dde6" stroke-width="1.5" stroke-linejoin="round" stroke-linecap="round" />
<polyline points="1092.0,918.0 1130.0,912.0 1150.0,916.0" fill="none" stroke="#d6dde6" stroke-width="1.5" stroke-linejoin="round" stroke-linecap="round" />
<polyline points="1100.0,960.0 1140.0,966.0 1164.0,962.0" fill="none" stroke="#d6dde6" stroke-width="1.5" stroke-linejoin="round" stroke-linecap="round" />
<polyline points="1110.0,930.0 1124.0,936.0 1130.0,960.0" fill="none" stroke="#d6dde6" stroke-width="1.5" stroke-linejoin="round" stroke-linecap="round" />
<polyline points="1150.0,916.0 1146.0,950.0 1140.0,985.0 1130.0,1010.0" fill="none" stroke="#d6dde6" stroke-width="1.5" stroke-linejoin="round" stroke-linecap="round" />
<polyline points="1140.0,985.0 1176.0,990.0 1200.0,986.0" fill="none" stroke="#d6dde6" stroke-width="1.5" stroke-linejoin="round" stroke-linecap="round" />
<polyline points="1176.0,906.0 1184.0,940.0 1190.0,980.0 1196.0,1020.0" fill="none" stroke="#d6dde6" stroke-width="1.5" stroke-linejoin="round" stroke-linecap="round" />
<polyline points="1200.0,900.0 1212.0,930.0 1222.0,960.0" fill="none" stroke="#d6dde6" stroke-width="1.5" stroke-linejoin="round" stroke-linecap="round" />
<polyline points="1232.0,880.0 1240.0,910.0 1244.0,940.0" fill="none" stroke="#d6dde6" stroke-width="1.5" stroke-linejoin="round" stroke-linecap="round" />
<polyline points="1160.0,1000.0 1170.0,1030.0 1172.0,1060.0" fill="none" stroke="#d6dde6" stroke-width="1.5" stroke-linejoin="round" stroke-linecap="round" />
<polyline points="1130.0,1010.0 1150.0,1020.0 1160.0,1044.0" fill="none" stroke="#d6dde6" stroke-width="1.5" stroke-linejoin="round" stroke-linecap="round" />
<polyline points="1218.0,935.0 1240.0,940.0 1254.0,936.0" fill="none" stroke="#d6dde6" stroke-width="1.5" stroke-linejoin="round" stroke-linecap="round" />
<polyline points="1222.0,940.0 1220.0,965.0" fill="none" stroke="#d6dde6" stroke-width="1.5" stroke-linejoin="round" stroke-linecap="round" />
<polyline points="1003.0,1052.0 1020.0,1046.0 1060.0,1040.0 1092.0,1030.0" fill="none" stroke="#d6dde6" stroke-width="1.5" stroke-linejoin="round" stroke-linecap="round" />
<polyline points="996.0,1072.0 1040.0,1072.0 1060.0,1070.0 1090.0,1074.0" fill="none" stroke="#d6dde6" stroke-width="1.5" stroke-linejoin="round" stroke-linecap="round" />
<polyline points="994.0,1100.0 1020.0,1104.0 1060.0,1106.0 1080.0,1110.0" fill="none" stroke="#d6dde6" stroke-width="1.5" stroke-linejoin="round" stroke-linecap="round" />
<polyline points="1010.0,1072.0 1004.0,1100.0 998.0,1130.0 1000.0,1160.0" fill="none" stroke="#d6dde6" stroke-width="1.5" stroke-linejoin="round" stroke-linecap="round" />
<polyline points="1022.0,1046.0 1016.0,1080.0 1008.0,1110.0" fill="none" stroke="#d6dde6" stroke-width="1.5" stroke-linejoin="round" stroke-linecap="round" />
<polyline points="1060.0,1040.0 1056.0,1080.0 1058.0,1120.0 1062.0,1160.0 1064.0,1200.0" fill="none" stroke="#d6dde6" stroke-width="1.5" stroke-linejoin="round" stroke-linecap="round" />
<polyline points="1040.0,1072.0 1030.0,1110.0 1034.0,1150.0 1044.0,1180.0" fill="none" stroke="#d6dde6" stroke-width="1.5" stroke-linejoin="round" stroke-linecap="round" />
<polyline points="1000.0,1090.0 1030.0,1140.0 1060.0,1180.0 1070.0,1210.0" fill="none" stroke="#d6dde6" stroke-width="1.5" stroke-linejoin="round" stroke-linecap="round" />
<polyline points="1082.0,1110.0 1110.0,1118.0 1116.0,1096.0 1100.0,1080.0" fill="none" stroke="#d6dde6" stroke-width="1.5" stroke-linejoin="round" stroke-linecap="round" />
<polyline points="1062.0,1120.0 1100.0,1122.0 1140.0,1118.0" fill="none" stroke="#d6dde6" stroke-width="1.5" stroke-linejoin="round" stroke-linecap="round" />
<polyline points="1060.0,1146.0 1100.0,1144.0 1130.0,1130.0 1148.0,1112.0" fill="none" stroke="#d6dde6" stroke-width="1.5" stroke-linejoin="round" stroke-linecap="round" />
<polyline points="1100.0,1144.0 1104.0,1160.0 1110.0,1182.0" fill="none" stroke="#d6dde6" stroke-width="1.5" stroke-linejoin="round" stroke-linecap="round" />
<polyline points="1000.0,1160.0 1030.0,1170.0 1060.0,1176.0" fill="none" stroke="#d6dde6" stroke-width="1.5" stroke-linejoin="round" stroke-linecap="round" />
<polyline points="984.0,1180.0 1000.0,1196.0 1010.0,1220.0 1012.0,1250.0" fill="none" stroke="#d6dde6" stroke-width="1.5" stroke-linejoin="round" stroke-linecap="round" />
<polyline points="1044.0,1180.0 1076.0,1192.0 1112.0,1190.0" fill="none" stroke="#d6dde6" stroke-width="1.5" stroke-linejoin="round" stroke-linecap="round" />
<polyline points="960.0,1200.0 990.0,1210.0 1010.0,1220.0 1050.0,1226.0 1090.0,1230.0" fill="none" stroke="#d6dde6" stroke-width="1.5" stroke-linejoin="round" stroke-linecap="round" />
<polyline points="950.0,1236.0 980.0,1240.0 1010.0,1250.0 1060.0,1250.0 1100.0,1256.0" fill="none" stroke="#d6dde6" stroke-width="1.5" stroke-linejoin="round" stroke-linecap="round" />
<polyline points="980.0,1240.0 976.0,1262.0 980.0,1273.0" fill="none" stroke="#d6dde6" stroke-width="1.5" stroke-linejoin="round" stroke-linecap="round" />
<polyline points="1012.0,1250.0 1020.0,1273.0" fill="none" stroke="#d6dde6" stroke-width="1.5" stroke-linejoin="round" stroke-linecap="round" />
<polyline points="1090.0,1190.0 1094.0,1230.0 1100.0,1260.0" fill="none" stroke="#d6dde6" stroke-width="1.5" stroke-linejoin="round" stroke-linecap="round" />
<polyline points="1066.0,1204.0 1064.0,1226.0 1066.0,1250.0" fill="none" stroke="#d6dde6" stroke-width="1.5" stroke-linejoin="round" stroke-linecap="round" />
<polyline points="960.0,1262.0 1000.0,1268.0 1060.0,1266.0 1100.0,1270.0" fill="none" stroke="#d6dde6" stroke-width="1.5" stroke-linejoin="round" stroke-linecap="round" />
<polyline points="1114.0,1160.0 1150.0,1150.0 1164.0,1154.0" fill="none" stroke="#d6dde6" stroke-width="1.5" stroke-linejoin="round" stroke-linecap="round" />
<polyline points="1112.0,1182.0 1140.0,1176.0 1150.0,1186.0" fill="none" stroke="#d6dde6" stroke-width="1.5" stroke-linejoin="round" stroke-linecap="round" />
<polyline points="1040.0,1146.0 1046.0,1196.0 1040.0,1230.0" fill="none" stroke="#d6dde6" stroke-width="1.5" stroke-linejoin="round" stroke-linecap="round" />
<polyline points="1712.0,676.0 1718.0,700.0 1720.0,740.0 1706.0,770.0 1694.0,800.0 1690.0,830.0 1700.0,846.0" fill="none" stroke="#d6dde6" stroke-width="1.5" stroke-linejoin="round" stroke-linecap="round" />
<polyline points="1734.0,676.0 1744.0,710.0 1744.0,730.0 1726.0,760.0 1712.0,790.0 1706.0,820.0 1706.0,850.0 1720.0,880.0" fill="none" stroke="#d6dde6" stroke-width="1.5" stroke-linejoin="round" stroke-linecap="round" />
<polyline points="1744.0,730.0 1770.0,728.0 1800.0,732.0" fill="none" stroke="#d6dde6" stroke-width="1.5" stroke-linejoin="round" stroke-linecap="round" />
<polyline points="1756.0,676.0 1764.0,700.0 1766.0,730.0 1768.0,780.0 1770.0,820.0" fill="none" stroke="#d6dde6" stroke-width="1.5" stroke-linejoin="round" stroke-linecap="round" />
<polyline points="1720.0,780.0 1752.0,784.0 1790.0,786.0 1800.0,780.0" fill="none" stroke="#d6dde6" stroke-width="1.5" stroke-linejoin="round" stroke-linecap="round" />
<polyline points="1716.0,790.0 1714.0,806.0 1750.0,810.0 1770.0,812.0" fill="none" stroke="#d6dde6" stroke-width="1.5" stroke-linejoin="round" stroke-linecap="round" />
<polyline points="1732.0,740.0 1748.0,756.0 1758.0,748.0" fill="none" stroke="#d6dde6" stroke-width="1.5" stroke-linejoin="round" stroke-linecap="round" />
<polyline points="1770.0,740.0 1800.0,736.0 1802.0,760.0 1770.0,764.0" fill="none" stroke="#d6dde6" stroke-width="1.5" stroke-linejoin="round" stroke-linecap="round" />
<polyline points="1786.0,676.0 1790.0,690.0 1796.0,700.0" fill="none" stroke="#d6dde6" stroke-width="1.5" stroke-linejoin="round" stroke-linecap="round" />
<polyline points="1800.0,732.0 1806.0,760.0 1810.0,800.0 1820.0,840.0 1826.0,880.0 1826.0,900.0" fill="none" stroke="#d6dde6" stroke-width="1.5" stroke-linejoin="round" stroke-linecap="round" />
<polyline points="1770.0,820.0 1810.0,818.0 1830.0,820.0" fill="none" stroke="#d6dde6" stroke-width="1.5" stroke-linejoin="round" stroke-linecap="round" />
<polyline points="1700.0,846.0 1730.0,848.0 1760.0,846.0 1768.0,842.0" fill="none" stroke="#d6dde6" stroke-width="1.5" stroke-linejoin="round" stroke-linecap="round" />
<polyline points="1690.0,830.0 1700.0,860.0 1730.0,892.0 1727.0,920.0 1725.0,968.0 1723.0,994.0 1730.0,1010.0 1728.0,1038.0 1736.0,1056.0" fill="none" stroke="#d6dde6" stroke-width="1.5" stroke-linejoin="round" stroke-linecap="round" />
<polyline points="1730.0,920.0 1760.0,924.0 1790.0,924.0 1800.0,915.0" fill="none" stroke="#d6dde6" stroke-width="1.5" stroke-linejoin="round" stroke-linecap="round" />
<polyline points="1756.0,850.0 1758.0,880.0 1764.0,900.0 1762.0,924.0" fill="none" stroke="#d6dde6" stroke-width="1.5" stroke-linejoin="round" stroke-linecap="round" />
<polyline points="1770.0,860.0 1772.0,900.0 1776.0,930.0 1770.0,960.0 1766.0,980.0" fill="none" stroke="#d6dde6" stroke-width="1.5" stroke-linejoin="round" stroke-linecap="round" />
<polyline points="1726.0,968.0 1744.0,968.0 1744.0,990.0 1760.0,1000.0 1790.0,1010.0 1805.0,1016.0" fill="none" stroke="#d6dde6" stroke-width="1.5" stroke-linejoin="round" stroke-linecap="round" />
<polyline points="1746.0,924.0 1748.0,950.0 1760.0,960.0 1776.0,960.0" fill="none" stroke="#d6dde6" stroke-width="1.5" stroke-linejoin="round" stroke-linecap="round" />
<polyline points="1727.0,1010.0 1746.0,1010.0 1760.0,1024.0 1776.0,1040.0 1790.0,1050.0" fill="none" stroke="#d6dde6" stroke-width="1.5" stroke-linejoin="round" stroke-linecap="round" />
<polyline points="1746.0,1010.0 1764.0,990.0 1784.0,1004.0 1760.0,1034.0 1744.0,1050.0" fill="none" stroke="#d6dde6" stroke-width="1.5" stroke-linejoin="round" stroke-linecap="round" />
<polyline points="1790.0,1010.0 1780.0,1030.0 1756.0,1060.0" fill="none" stroke="#d6dde6" stroke-width="1.5" stroke-linejoin="round" stroke-linecap="round" />
<polyline points="1805.0,1016.0 1830.0,1010.0 1850.0,1004.0" fill="none" stroke="#d6dde6" stroke-width="1.5" stroke-linejoin="round" stroke-linecap="round" />
<polyline points="1830.0,1010.0 1836.0,1030.0 1846.0,1040.0 1840.0,1056.0" fill="none" stroke="#d6dde6" stroke-width="1.5" stroke-linejoin="round" stroke-linecap="round" />
<polyline points="1806.0,1040.0 1830.0,1036.0 1850.0,1026.0" fill="none" stroke="#d6dde6" stroke-width="1.5" stroke-linejoin="round" stroke-linecap="round" />
<polyline points="1780.0,1040.0 1790.0,1066.0 1800.0,1075.0" fill="none" stroke="#d6dde6" stroke-width="1.5" stroke-linejoin="round" stroke-linecap="round" />
<polyline points="1750.0,762.0 1756.0,776.0" fill="none" stroke="#d6dde6" stroke-width="1.5" stroke-linejoin="round" stroke-linecap="round" />
<polyline points="1790.0,786.0 1792.0,810.0" fill="none" stroke="#d6dde6" stroke-width="1.5" stroke-linejoin="round" stroke-linecap="round" />
<polyline points="1802.0,1154.0 1826.0,1172.0 1822.0,1186.0 1806.0,1190.0 1800.0,1182.0 1786.0,1178.0 1780.0,1196.0 1798.0,1204.0 1794.0,1220.0 1776.0,1216.0 1774.0,1204.0 1756.0,1208.0 1748.0,1224.0 1744.0,1250.0 1736.0,1273.0" fill="none" stroke="#d6dde6" stroke-width="1.5" stroke-linejoin="round" stroke-linecap="round" />
<polyline points="1826.0,1150.0 1800.0,1196.0 1776.0,1240.0 1750.0,1273.0" fill="none" stroke="#d6dde6" stroke-width="1.5" stroke-linejoin="round" stroke-linecap="round" />
<polyline points="1762.0,1212.0 1776.0,1228.0 1780.0,1216.0" fill="none" stroke="#d6dde6" stroke-width="1.5" stroke-linejoin="round" stroke-linecap="round" />
<polyline points="1836.0,1200.0 1830.0,1240.0 1834.0,1262.0" fill="none" stroke="#d6dde6" stroke-width="1.5" stroke-linejoin="round" stroke-linecap="round" />
<polyline points="1270.0,682.0 1288.0,696.0 1298.0,712.0 1326.0,728.0 1350.0,736.0 1362.0,742.0" fill="none" stroke="#cdd7e1" stroke-width="3" stroke-linejoin="round" stroke-linecap="round" />
<polyline points="1270.0,757.0 1292.0,756.0 1322.0,748.0 1346.0,742.0" fill="none" stroke="#cdd7e1" stroke-width="3" stroke-linejoin="round" stroke-linecap="round" />
<polyline points="1117.0,800.0 1140.0,802.0 1160.0,798.0 1180.0,804.0" fill="none" stroke="#cdd7e1" stroke-width="3" stroke-linejoin="round" stroke-linecap="round" />
<polyline points="1350.0,818.0 1358.0,826.0 1362.0,848.0 1370.0,860.0 1404.0,874.0 1440.0,892.0 1458.0,896.0" fill="none" stroke="#cdd7e1" stroke-width="3" stroke-linejoin="round" stroke-linecap="round" />
<polyline points="1160.0,862.0 1178.0,842.0 1206.0,828.0 1226.0,824.0" fill="none" stroke="#cdd7e1" stroke-width="3" stroke-linejoin="round" stroke-linecap="round" />
<polyline points="1094.0,858.0 1098.0,880.0 1104.0,900.0" fill="none" stroke="#cdd7e1" stroke-width="3" stroke-linejoin="round" stroke-linecap="round" />
<polyline points="1092.0,918.0 1098.0,950.0 1104.0,990.0" fill="none" stroke="#cdd7e1" stroke-width="3" stroke-linejoin="round" stroke-linecap="round" />
<polyline points="1700.0,846.0 1704.0,864.0 1730.0,892.0 1727.0,920.0 1725.0,968.0 1723.0,994.0 1730.0,1010.0 1728.0,1038.0" fill="none" stroke="#cdd7e1" stroke-width="3" stroke-linejoin="round" stroke-linecap="round" />
<polyline points="1730.0,1050.0 1750.0,1064.0 1790.0,1068.0 1830.0,1062.0 1846.0,1050.0" fill="none" stroke="#cdd7e1" stroke-width="3" stroke-linejoin="round" stroke-linecap="round" />
<polyline points="1720.0,740.0 1706.0,770.0 1694.0,800.0 1690.0,830.0" fill="none" stroke="#cdd7e1" stroke-width="3" stroke-linejoin="round" stroke-linecap="round" />
<polyline points="1766.0,676.0 1770.0,700.0 1770.0,730.0" fill="none" stroke="#cdd7e1" stroke-width="3" stroke-linejoin="round" stroke-linecap="round" />
<polyline points="1104.0,780.0 1100.0,820.0 1102.0,860.0 1106.0,880.0" fill="none" stroke="#dcdde2" stroke-width="1.5" stroke-linejoin="round" stroke-linecap="round" />
<polyline points="1270.0,840.0 1290.0,820.0 1310.0,800.0" fill="none" stroke="#dcdde2" stroke-width="1.5" stroke-linejoin="round" stroke-linecap="round" />
<polyline points="1280.0,846.0 1300.0,826.0 1318.0,806.0" fill="none" stroke="#dcdde2" stroke-width="1.5" stroke-linejoin="round" stroke-linecap="round" />
<polyline points="1020.0,1180.0 1032.0,1150.0 1040.0,1120.0" fill="none" stroke="#dcdde2" stroke-width="1.5" stroke-linejoin="round" stroke-linecap="round" />
<polyline points="1780.0,760.0 1772.0,790.0" fill="none" stroke="#dcdde2" stroke-width="1.5" stroke-linejoin="round" stroke-linecap="round" />
<polyline points="1147.0,693.6 1134.4,718.7 1112.0,738.0 1108.0,748.0 1115.5,761.1 1117.0,795.7 1117.0,869.5 1118.0,882.0" fill="none" stroke="#a6b6d2" stroke-width="4.2" stroke-linejoin="round" stroke-linecap="round" />
<polyline points="1118.0,883.0 1100.0,890.0 1080.0,896.0 1066.0,897.0 1052.0,908.0 1036.0,918.0 1018.0,929.0 1008.0,942.0 1003.0,962.0 996.0,990.0 989.0,1018.0 985.0,1040.0 988.0,1052.0 991.6,1064.0 982.6,1091.0 984.0,1110.0 986.0,1125.5 990.0,1150.0 990.0,1166.0 976.0,1174.0 963.0,1181.0 952.0,1196.0 947.0,1206.0 940.0,1230.0 937.0,1249.5 942.0,1262.0 952.0,1270.0 975.0,1276.0" fill="none" stroke="#a6b6d2" stroke-width="4.2" stroke-linejoin="round" stroke-linecap="round" />
<polyline points="1120.2,883.0 1135.9,903.4 1145.4,902.6 1172.0,905.8" fill="none" stroke="#a6b6d2" stroke-width="4.2" stroke-linejoin="round" stroke-linecap="round" />
<polyline points="1195.6,904.2 1211.3,897.1 1258.5,879.8 1278.9,862.6 1309.3,839.7 1345.4,813.0 1370.5,794.1 1395.7,764.3 1409.8,743.8 1424.0,709.3 1435.0,677.0 1438.0,668.0" fill="none" stroke="#a6b6d2" stroke-width="4.2" stroke-linejoin="round" stroke-linecap="round" />
<polyline points="1183.0,925.4 1164.2,963.1 1156.4,983.5 1137.5,1007.1 1109.2,1046.4 1100.0,1060.0 1091.0,1074.0 1085.0,1090.0 1081.4,1106.4 1075.6,1138.8 1068.0,1182.7 1065.0,1210.0 1064.2,1236.0" fill="none" stroke="#a6b6d2" stroke-width="4.2" stroke-linejoin="round" stroke-linecap="round" />
<polyline points="1148.2,1114.0 1160.0,1104.0 1176.8,1096.8 1201.6,1095.0 1224.5,1100.6 1270.0,1125.5 1300.5,1142.6 1331.0,1148.6 1380.0,1145.0 1402.0,1144.0 1441.6,1139.6 1475.3,1136.7 1526.6,1133.0 1552.0,1131.8 1575.0,1133.0 1608.7,1141.0 1632.2,1152.8 1645.4,1160.0 1680.0,1186.5 1722.0,1222.8 1736.0,1248.0 1749.0,1273.0 1760.0,1290.0" fill="none" stroke="#a6b6d2" stroke-width="4.2" stroke-linejoin="round" stroke-linecap="round" />
<polyline points="1372.0,857.0 1364.0,872.0 1360.0,882.0" fill="none" stroke="#a6b6d2" stroke-width="4.2" stroke-linejoin="round" stroke-linecap="round" />
<polyline points="1841.3,997.7 1860.0,1002.0 1888.5,1007.0 1900.0,1000.0 1910.0,994.5 1920.0,988.0" fill="none" stroke="#a6b6d2" stroke-width="4.2" stroke-linejoin="round" stroke-linecap="round" />
<polyline points="1812.0,940.0 1816.0,975.0 1822.0,1000.0" fill="none" stroke="#a6b6d2" stroke-width="4.2" stroke-linejoin="round" stroke-linecap="round" />
<polyline points="1832.0,1200.0 1830.0,1230.0 1826.0,1262.0 1836.0,1266.0 1850.0,1258.0" fill="none" stroke="#a6b6d2" stroke-width="3.4" stroke-linejoin="round" stroke-linecap="round" />
<polyline points="1402.0,921.0 1420.0,904.0 1458.5,895.6 1480.0,886.0" fill="none" stroke="#b9c3d6" stroke-width="3.2" stroke-linejoin="round" stroke-linecap="round" />
<polyline points="1133.0,1179.0 1149.0,1183.0" fill="none" stroke="#f5f5f8" stroke-width="3" stroke-linejoin="round" stroke-linecap="round" />
<polyline points="1133.0,1187.0 1149.0,1191.0" fill="none" stroke="#f5f5f8" stroke-width="3" stroke-linejoin="round" stroke-linecap="round" />
<polyline points="1133.0,1195.0 1149.0,1199.0" fill="none" stroke="#f5f5f8" stroke-width="3" stroke-linejoin="round" stroke-linecap="round" />
<defs><filter id="halo" x="-5%" y="-25%" width="110%" height="150%"><feMorphology in="SourceAlpha" operator="dilate" radius="1.5" result="d"/><feGaussianBlur in="d" stdDeviation="0.4" result="b"/><feFlood flood-color="#fff"/><feComposite in2="b" operator="in" result="h"/><feMerge><feMergeNode in="h"/><feMergeNode in="SourceGraphic"/></feMerge></filter></defs>
<g font-family="'Liberation Sans','Noto Sans CJK SC',sans-serif">
<text x="1152.6" y="688.8" font-size="18" text-anchor="end" textLength="101.5" lengthAdjust="spacing" fill="#1968d6" stroke="#fff" stroke-width="3.2" stroke-linejoin="round" paint-order="stroke" >Chhatrapati</text>
<text x="1152.6" y="712.1" font-size="18" text-anchor="end" textLength="56.5" lengthAdjust="spacing" fill="#1968d6" stroke="#fff" stroke-width="3.2" stroke-linejoin="round" paint-order="stroke" >Shivaji</text>
<text x="1152.6" y="735.7" font-size="18" text-anchor="end" textLength="70.5" lengthAdjust="spacing" fill="#1968d6" stroke="#fff" stroke-width="3.2" stroke-linejoin="round" paint-order="stroke" >Maharaj</text>
<text x="1152.6" y="759.2" font-size="18" text-anchor="end" textLength="123.5" lengthAdjust="spacing" fill="#1968d6" stroke="#fff" stroke-width="3.2" stroke-linejoin="round" paint-order="stroke" >International...</text>
<text x="1002.0" y="863.2" font-size="11.8" text-anchor="start" font-weight="700" textLength="101.0" lengthAdjust="spacing" fill="#6a6e80" stroke="#fff" stroke-width="2.6" stroke-linejoin="round" paint-order="stroke" >BANDRA WEST</text>
<text x="1131.6" y="921.0" font-size="18" text-anchor="start" textLength="106.0" lengthAdjust="spacing" fill="#3c4052" stroke="#fff" stroke-width="3.2" stroke-linejoin="round" paint-order="stroke" >Sion Koliwada</text>
<text x="1184.4" y="940.6" font-size="15.5" text-anchor="middle" textLength="34.0" lengthAdjust="spacingAndGlyphs" fill="#3c4052" stroke="#fff" stroke-width="3.2" stroke-linejoin="round" paint-order="stroke" >सायन</text>
<text x="1184.6" y="960.4" font-size="15.5" text-anchor="middle" textLength="61.0" lengthAdjust="spacingAndGlyphs" fill="#3c4052" stroke="#fff" stroke-width="3.2" stroke-linejoin="round" paint-order="stroke" >कोळिवाडा</text>
<text x="1286.2" y="884.9" font-size="12" text-anchor="start" font-weight="700" textLength="75.0" lengthAdjust="spacing" fill="#6a6e80" stroke="#fff" stroke-width="2.6" stroke-linejoin="round" paint-order="stroke" >CHEMBUR</text>
<text x="1320.6" y="898.9" font-size="13.5" text-anchor="middle" textLength="24.5" lengthAdjust="spacingAndGlyphs" fill="#5a5f73" stroke="#fff" stroke-width="2.6" stroke-linejoin="round" paint-order="stroke" >चेंबूर</text>
<text x="1667.8" y="795.8" font-size="12" text-anchor="start" font-weight="700" textLength="42.4" lengthAdjust="spacing" fill="#6a6e80" stroke="#fff" stroke-width="2.6" stroke-linejoin="round" paint-order="stroke" >VASHI</text>
<text x="1689.0" y="811.0" font-size="13.5" text-anchor="middle" textLength="23.4" lengthAdjust="spacingAndGlyphs" fill="#5a5f73" stroke="#fff" stroke-width="2.6" stroke-linejoin="round" paint-order="stroke" >वाशी</text>
<text x="1090.0" y="1020.9" font-size="15.6" text-anchor="start" font-weight="700" textLength="62.5" lengthAdjust="spacing" fill="#4a4e60" stroke="#fff" stroke-width="2.8" stroke-linejoin="round" paint-order="stroke" >DADAR</text>
<text x="1121.0" y="1040.4" font-size="16.5" text-anchor="middle" textLength="33.0" lengthAdjust="spacingAndGlyphs" fill="#4a4e60" stroke="#fff" stroke-width="3.2" stroke-linejoin="round" paint-order="stroke" >दादर</text>
<text x="1029.4" y="978.0" font-size="19.4" text-anchor="end" textLength="177.0" lengthAdjust="spacing" fill="#3c4052" stroke="#fff" stroke-width="3.2" stroke-linejoin="round" paint-order="stroke" >Shree Siddhivinayak</text>
<text x="1029.4" y="1000.6" font-size="19.4" text-anchor="end" textLength="65.5" lengthAdjust="spacing" fill="#3c4052" stroke="#fff" stroke-width="3.2" stroke-linejoin="round" paint-order="stroke" >Temple</text>
<text x="1029.4" y="1020.6" font-size="15" text-anchor="end" textLength="96.0" lengthAdjust="spacingAndGlyphs" fill="#3c4052" stroke="#fff" stroke-width="3.2" stroke-linejoin="round" paint-order="stroke" >श्री सिद्धीविनायक</text>
<text x="1029.4" y="1039.4" font-size="15" text-anchor="end" textLength="61.5" lengthAdjust="spacingAndGlyphs" fill="#3c4052" stroke="#fff" stroke-width="3.2" stroke-linejoin="round" paint-order="stroke" >मंदिर, मुंबई</text>
<text x="804.6" y="1138.8" font-size="19.4" text-anchor="start" textLength="131.0" lengthAdjust="spacing" fill="#3c4052" stroke="#fff" stroke-width="3.2" stroke-linejoin="round" paint-order="stroke" >Haji Ali Dargah</text>
<text x="994.5" y="1255.3" font-size="36.4" text-anchor="start" textLength="134.0" lengthAdjust="spacing" fill="#25272e" stroke="#25272e" stroke-width="1.1" stroke-linejoin="round" filter="url(#halo)" >Mumbai</text>
<text x="1062.0" y="1297.0" font-size="35" text-anchor="middle" textLength="76.0" lengthAdjust="spacingAndGlyphs" fill="#25272e" stroke="#25272e" stroke-width="0.8" stroke-linejoin="round" filter="url(#halo)" >मुंबई</text>
<text x="1702.0" y="954.5" font-size="35.8" text-anchor="start" textLength="219.0" lengthAdjust="spacing" fill="#25272e" stroke="#25272e" stroke-width="1.1" stroke-linejoin="round" filter="url(#halo)" >Navi Mumbai</text>
<text x="1810.6" y="1000.0" font-size="35" text-anchor="middle" textLength="124.0" lengthAdjust="spacingAndGlyphs" fill="#25272e" stroke="#25272e" stroke-width="0.8" stroke-linejoin="round" filter="url(#halo)" >नवी मुंबई</text>
<text x="1254.6" y="1222.8" font-size="19.4" text-anchor="start" textLength="146.5" lengthAdjust="spacing" fill="#3c4052" stroke="#fff" stroke-width="3.2" stroke-linejoin="round" paint-order="stroke" >Elephanta Caves</text>
<text x="1401.8" y="1243.0" font-size="15" text-anchor="end" textLength="76.3" lengthAdjust="spacingAndGlyphs" fill="#3c4052" stroke="#fff" stroke-width="3.2" stroke-linejoin="round" paint-order="stroke" >एलिफंटा गुंफा</text>
<text x="1876.4" y="1103.5" font-size="19.4" text-anchor="start" textLength="38.5" lengthAdjust="spacing" fill="#1968d6" stroke="#fff" stroke-width="3.2" stroke-linejoin="round" paint-order="stroke" >Navi</text>
<text x="1847.0" y="1127.4" font-size="19.4" text-anchor="start" textLength="133.0" lengthAdjust="spacing" fill="#1968d6" stroke="#fff" stroke-width="3.2" stroke-linejoin="round" paint-order="stroke" >International...</text>
<text x="1806.6" y="1204.0" font-size="17.6" text-anchor="start" textLength="46.0" lengthAdjust="spacing" fill="#3c4052" stroke="#fff" stroke-width="3.2" stroke-linejoin="round" paint-order="stroke" >Wahal</text>
<text x="1812.0" y="1223.0" font-size="16" text-anchor="start" textLength="34.0" lengthAdjust="spacingAndGlyphs" fill="#3c4052" stroke="#fff" stroke-width="3.2" stroke-linejoin="round" paint-order="stroke" >वहाळ</text>
<text font-size="12.5" fill="#4d5166" stroke="#fff" stroke-width="2.8" stroke-linejoin="round" paint-order="stroke" x="1402.9 1411.9 1419.4 1424.1 1427.5 1431.5 1440.4 1444.4 1451.9 1455.3 1459.3 1468.2 1471.6 1479.1 1486.7 1491.4 1494.8 1498.9 1507.8 1515.3 1518.7 1526.2 1533.8 1540.5 1547.9 1555.5 1559.4 1567.3 1571.8 1579.1 1586.4 1593.1 1596.9 1605.8 1612.5 1616.6 1620.1 1626.8 1630.0 1636.5" y="1148.2 1147.2 1146.4 1145.8 1145.5 1145.0 1144.0 1143.6 1142.9 1142.6 1142.3 1141.6 1141.3 1140.7 1140.1 1139.8 1139.5 1139.2 1138.6 1138.1 1137.8 1137.3 1136.8 1136.4 1136.1 1136.1 1136.0 1136.3 1136.8 1138.1 1139.5 1141.0 1141.9 1144.5 1147.1 1149.1 1151.0 1154.7 1156.6 1159.3" rotate="-6.3 -6.5 -6.6 -6.5 -6.4 -6.1 -5.7 -5.4 -5.1 -4.9 -4.6 -4.5 -4.4 -4.3 -4.3 -4.2 -4.2 -4.1 -4.0 -4.0 -3.8 -3.7 -3.6 -2.3 -0.1 -0.3 2.0 6.3 9.4 11.3 12.8 13.9 16.1 20.8 25.4 28.0 29.6 28.9 24.0 31.8">Shri Atal Bihari Vajpayee Trans Hbr Link</text>
</g>
<g><path d="M1039.5 1027 V998 L1042 993 L1044.5 998 V1027 Z M1046.5 1027 V996 L1049 991 L1051.5 996 V1027 Z M1053.5 1027 V994 L1056.2 988.5 L1059 994 V1027 Z M1061 1027 V996 L1063.5 991 L1066 996 V1027 Z M1068 1027 V998 L1070.5 993 L1073 998 V1027 Z" fill="#8d8e9e" stroke="#fff" stroke-width="1.6" paint-order="stroke"/><path d="M1044.5 1002 H1046.5 V1027 H1044.5 Z M1051.5 1000 H1053.5 V1027 H1051.5 Z M1059 1000 H1061 V1027 H1059 Z M1066 1002 H1068 V1027 H1066 Z" fill="#c8c9d4"/><path d="M1048.6 985.2 C1049 980.5 1052.6 978.6 1054.6 977.4 L1056.2 974.6 L1057.8 977.4 C1059.8 978.6 1063.4 980.5 1063.8 985.2 C1064 987.2 1062 987.6 1056.2 987.6 C1050.4 987.6 1048.4 987.2 1048.6 985.2 Z" fill="#3b3d4d" stroke="#fff" stroke-width="1.6" paint-order="stroke"/><rect x="1038" y="1026" width="36.4" height="2" fill="#3b3d4d"/></g>
<g><path d="M946 1161 V1140 L947.5 1137 L949 1140 V1144 H961 V1132 L962.6 1128 L964.2 1132 V1144 H968 V1136 L969.6 1132.4 L971.2 1136 V1144 H993 V1118 H991.6 V1115.4 H993.2 V1111 H992 L994.9 1106.6 V1104.4 V1106.6 L997.8 1111 H996.6 V1115.4 H998.2 V1118 H996.8 V1144 H1002.6 V1140 L1004 1137 L1005.4 1140 V1161 Z" fill="#8d8e9e" stroke="#fff" stroke-width="1.8" paint-order="stroke" stroke-linejoin="round"/><path d="M981.6 1144 C981.6 1138.6 985 1136 987.6 1135.6 V1133.8 V1135.6 C990.2 1136 993.4 1138.6 993.4 1144 Z" fill="#3b3d4d"/><path d="M966 1161 V1153.4 C966 1150.2 968 1148.4 970.5 1148.4 C973 1148.4 975 1150.2 975 1153.4 V1161 Z" fill="#3b3d4d"/><path d="M951 1149.6 H957.4 V1151.6 H951 Z M983 1149.6 H989.6 V1151.6 H983 Z M993.6 1149.6 H999.4 V1151.6 H993.6 Z M991.8 1111 H998 V1112.8 H991.8 Z M992 1122 H997.8 V1123.6 H992 Z" fill="#3b3d4d"/><rect x="944.4" y="1160" width="62.4" height="2.2" fill="#3b3d4d"/></g>
<g><rect x="1411.2" y="1211.4" width="54.4" height="29" fill="#c8c9d4" stroke="#fff" stroke-width="1.8" paint-order="stroke"/><rect x="1413.4" y="1215.6" width="50" height="23" fill="#3b3d4d"/><path d="M1412 1212.6 H1465 V1215 H1412 Z" fill="#8d8e9e"/><rect x="1415.3" y="1216.4" width="4.2" height="22.2" fill="#8d8e9e"/><rect x="1414.6" y="1216.2" width="5.6" height="2.6" fill="#c8c9d4"/><rect x="1422.3" y="1216.4" width="4.2" height="22.2" fill="#8d8e9e"/><rect x="1421.6" y="1216.2" width="5.6" height="2.6" fill="#c8c9d4"/><rect x="1429.5" y="1216.4" width="4.2" height="22.2" fill="#8d8e9e"/><rect x="1428.8" y="1216.2" width="5.6" height="2.6" fill="#c8c9d4"/><rect x="1444.7" y="1216.4" width="4.2" height="22.2" fill="#8d8e9e"/><rect x="1444.0" y="1216.2" width="5.6" height="2.6" fill="#c8c9d4"/><rect x="1452.1" y="1216.4" width="4.2" height="22.2" fill="#8d8e9e"/><rect x="1451.4" y="1216.2" width="5.6" height="2.6" fill="#c8c9d4"/><rect x="1459.3" y="1216.4" width="4.2" height="22.2" fill="#8d8e9e"/><rect x="1458.6" y="1216.2" width="5.6" height="2.6" fill="#c8c9d4"/><path d="M1434 1238.6 H1444 V1240.4 H1434 Z" fill="#fff"/></g>
<polyline points="1102.4,1258.0 1113.8,1228.5 1115.7,1201.8 1112.0,1182.7 1146.3,1106.4 1152.0,1072.0 1192.0,1051.0 1209.3,1049.0 1223.9,1016.5 1234.9,1000.8 1292.0,971.0 1314.8,960.7 1325.8,964.4 1351.7,949.7 1351.7,913.6 1402.0,920.7 1458.5,895.6 1527.6,867.3 1600.0,848.0 1652.0,819.6 1770.0,829.0 1768.3,878.3 1805.2,927.0 1805.2,1007.0 1810.0,1049.0 1819.6,1081.6 1841.5,1117.8 1842.5,1163.7 1839.6,1221.0 1836.8,1266.8 1880.0,1246.0 1909.0,1240.0" fill="none" stroke="#2a7ff6" stroke-width="7.6" stroke-linejoin="round" stroke-linecap="round" />
<g><path d="M1236.8 847.0 C1233.6 844.0 1228.4 841.0 1226.8 838.2 A13.3 13.3 0 1 1 1246.8 838.2 C1245.2 841.0 1240.0 844.0 1236.8 847.0 Z" fill="#fff" style="filter:drop-shadow(0 1px 1.5px rgba(0,0,0,0.3))"/><circle cx="1236.8" cy="829.4" r="11.4" fill="#1e7b56"/><text x="1236.8" y="833.3" font-size="11" text-anchor="middle" fill="#fff" font-family="'Liberation Sans',sans-serif" style="text-shadow:none">6</text></g>
<g><path d="M1354.4 906.9 C1351.2 903.9 1346.0 900.9 1344.4 898.1 A13.3 13.3 0 1 1 1364.4 898.1 C1362.8 900.9 1357.6 903.9 1354.4 906.9 Z" fill="#fff" style="filter:drop-shadow(0 1px 1.5px rgba(0,0,0,0.3))"/><circle cx="1354.4" cy="889.3" r="11.4" fill="#1a6de0"/><text x="1354.4" y="893.2" font-size="11" text-anchor="middle" fill="#fff" font-family="'Liberation Sans',sans-serif" style="text-shadow:none">3</text></g>
<g><path d="M1649.6 815.2 C1646.4 812.2 1641.2 809.2 1639.6 806.4 A13.3 13.3 0 1 1 1659.6 806.4 C1658.0 809.2 1652.8 812.2 1649.6 815.2 Z" fill="#fff" style="filter:drop-shadow(0 1px 1.5px rgba(0,0,0,0.3))"/><circle cx="1649.6" cy="797.6" r="11.4" fill="#1a6de0"/><text x="1649.6" y="801.5" font-size="11" text-anchor="middle" fill="#fff" font-family="'Liberation Sans',sans-serif" style="text-shadow:none">4</text></g>
<g><path d="M1811.8 927.6 C1808.6 924.6 1803.4 921.6 1801.8 918.8 A13.3 13.3 0 1 1 1821.8 918.8 C1820.2 921.6 1815.0 924.6 1811.8 927.6 Z" fill="#fff" style="filter:drop-shadow(0 1px 1.5px rgba(0,0,0,0.3))"/><circle cx="1811.8" cy="910.0" r="11.4" fill="#1a6de0"/><text x="1811.8" y="913.9" font-size="11" text-anchor="middle" fill="#fff" font-family="'Liberation Sans',sans-serif" style="text-shadow:none">5</text></g>
<g><path d="M1149.1 1070.5 C1145.9 1067.5 1140.7 1064.5 1139.1 1061.7 A13.3 13.3 0 1 1 1159.1 1061.7 C1157.5 1064.5 1152.3 1067.5 1149.1 1070.5 Z" fill="#fff" style="filter:drop-shadow(0 1px 1.5px rgba(0,0,0,0.3))"/><circle cx="1149.1" cy="1052.9" r="11.4" fill="#1a6de0"/><text x="1149.1" y="1056.8" font-size="11" text-anchor="middle" fill="#fff" font-family="'Liberation Sans',sans-serif" style="text-shadow:none">2</text></g>
<g><path d="M1100.5 1285.3 C1097.3 1282.3 1092.1 1279.3 1090.5 1276.5 A13.3 13.3 0 1 1 1110.5 1276.5 C1108.9 1279.3 1103.7 1282.3 1100.5 1285.3 Z" fill="#fff" style="filter:drop-shadow(0 1px 1.5px rgba(0,0,0,0.3))"/><circle cx="1100.5" cy="1267.7" r="11.4" fill="#1e7b56"/><text x="1100.5" y="1271.6" font-size="11" text-anchor="middle" fill="#fff" font-family="'Liberation Sans',sans-serif" style="text-shadow:none">1</text></g>
<g><path d="M1898.8 1244.5 C1895.6 1241.5 1890.4 1238.5 1888.8 1235.7 A13.3 13.3 0 1 1 1908.8 1235.7 C1907.2 1238.5 1902.0 1241.5 1898.8 1244.5 Z" fill="#fff" style="filter:drop-shadow(0 1px 1.5px rgba(0,0,0,0.3))"/><circle cx="1898.8" cy="1226.9" r="11.4" fill="#e2233b"/><text x="1898.8" y="1230.8" font-size="11" text-anchor="middle" fill="#fff" font-family="'Liberation Sans',sans-serif" style="text-shadow:none">6</text></g>
<g><path d="M1178.8 732.4 C1175.6 729.4 1170.4 726.4 1168.8 723.6 A15.9 15.9 0 1 1 1188.8 723.6 C1187.2 726.4 1182.0 729.4 1178.8 732.4 Z" fill="#fff" style="filter:drop-shadow(0 1px 1.5px rgba(0,0,0,0.3))"/><circle cx="1178.8" cy="714.8" r="14" fill="#1a73e8"/></g>
<path d="M1178.8 705.6 C1179.9 705.6 1180.4 706.6 1180.4 707.8 V712.4 L1188 717 V719 L1180.4 716.8 V720.6 L1182.8 722.4 V723.8 L1178.8 722.8 L1174.8 723.8 V722.4 L1177.2 720.6 V716.8 L1169.6 719 V717 L1177.2 712.4 V707.8 C1177.2 706.6 1177.7 705.6 1178.8 705.6 Z" fill="#fff"/>
</svg>
</div>
<!-- map ui -->
<div class="a" style="left:1748px;top:690px;width:155.6px;height:39.6px;border-radius:20px;background:#fff;box-shadow:0 2px 5px rgba(30,40,80,0.28)"></div>
<svg style="left:1760px;top:701px" width="18" height="18" viewBox="0 0 18 18"><g fill="none" stroke="#4a5068" stroke-width="1.6" stroke-linecap="round" stroke-linejoin="round"><path d="M7.4 3.2 H5.2 Q2.4 3.2 2.4 6 V12.8 Q2.4 15.6 5.2 15.6 H12 Q14.8 15.6 14.8 12.8 V10.6"/><path d="M10.4 2.4 H15.6 V7.6 M15.2 2.8 L8.4 9.6"/></g></svg>

<div class="a" style="left:1845.6px;top:1197px;width:40.8px;height:100px;border-radius:9px;background:#fff;box-shadow:0 1px 4px rgba(0,0,0,0.3)"></div>
<svg style="left:1845.6px;top:1197px" width="41" height="76" viewBox="0 0 41 76"><g fill="none" stroke="#555a66" stroke-width="1.7"><path d="M20.2 15.4 V30.4 M12.7 22.9 H27.7 M12.7 68.8 H27.7"/></g><path d="M5.6 46.4 H35" stroke="#e3e3e3" stroke-width="1.2"/></svg>
<!-- right rail -->
<svg style="left:1989px;top:58px" width="57" height="1215" viewBox="1989 58 57 1215">
<g class="ri">
<path d="M2017.3 76.7 L2025.4 81.9 L2022.9 90.5 L2012.6 91.5 Q2010.4 91.7 2010.9 89.5 L2014.4 77.6 Q2015.2 75.4 2017.3 76.7 Z"/>
<path d="M2025.6 82 L2028.9 83 Q2030.9 83.7 2030.4 85.8 L2029.2 90.2 Q2028.6 92.2 2026.5 91.6 L2023.2 90.6"/>
<path d="M2021.6 91.4 L2020 97.4 Q2019.6 99.3 2021.4 99.7 Q2022.6 99.9 2023.2 98.7 L2026 92.2"/>
<rect x="2009.2" y="125" width="22.6" height="16.6" rx="3.6"/><path d="M2020.4 141.8 V147.4 M2015.6 147.8 H2025.4"/>
<path d="M2017.9 129.6 L2024 133.3 L2017.9 137 Z" stroke-width="1.8"/>
<path d="M2010.6 250 V245.6 Q2010.6 242.2 2014 242.2 H2016.4 Q2017.8 242.2 2018.7 243.3 L2019.9 244.9 Q2020.8 246 2022.2 246 H2027 Q2030.4 246 2030.4 249.4 V250"/>
<path d="M2011.6 251.2 H2029.4 Q2032.4 251.2 2031.8 254.2 L2030.5 261.4 Q2029.9 264.4 2026.9 264.4 H2014.1 Q2011.1 264.4 2010.5 261.4 L2009.2 254.2 Q2008.6 251.2 2011.6 251.2 Z"/>
</g>
<rect x="2004.8" y="169.5" width="31" height="2.6" fill="#dddfe6"/><rect x="2004.8" y="286.6" width="31" height="2.6" fill="#dddfe6"/>
<g fill="none" stroke="#1a6fe2" stroke-width="1.7" stroke-linecap="round" stroke-linejoin="round"><path d="M2017.6 194.2 H2012.2 Q2009 194.2 2009 197.4 V207.4 Q2009 210.6 2012.2 210.6 H2016.2 M2022.6 194.2 H2028.6 Q2031.8 194.2 2031.8 197.4 V207.4 Q2031.8 210.6 2028.6 210.6 H2022.6 L2019.3 216.4"/></g>
<g fill="#e2233b"><circle cx="2014.8" cy="202.5" r="1.4"/><circle cx="2020.4" cy="202.5" r="1.4"/><circle cx="2025.9" cy="202.5" r="1.4"/></g>
<g stroke-linejoin="round" stroke-width="1.8"><path d="M2008.2 314.6 L2016 313.4 L2018.6 330.4 L2010 331.6 Z" fill="#fff" stroke="#e2233b"/><path d="M2016.4 311 L2032.6 313.4 L2030.2 330.4 L2014 328 Z" fill="#fff" stroke="#1a6fe2"/><path d="M2012 317 H2028.2 V333 H2012 Z" fill="#fff" stroke="#f6b13c" stroke-width="2"/></g>
<g stroke="#1c2136" stroke-width="1.6" stroke-linecap="round"><path d="M2015.6 320.8 H2024.6 M2015.6 323.7 H2024.6 M2015.6 326.6 H2024.6"/><path d="M2015.6 329.6 H2020.2" stroke="#1a6fe2"/></g>
<circle cx="2020.2" cy="1229" r="22.6" fill="#e4e5ec"/>
<path d="M2017.4 1223.6 L2022.8 1229 L2017.4 1234.4" fill="none" stroke="#2a2f45" stroke-width="2.6" stroke-linecap="round" stroke-linejoin="round"/>
</svg>
<svg style="left:0;top:0;will-change:transform;text-rendering:geometricPrecision" width="2046" height="1273" viewBox="0 0 2046 1273" font-family="'Liberation Sans','Noto Sans CJK SC',sans-serif">
<text x="79.80" y="38.40" font-size="23.4" fill="#fff" font-weight="700" textLength="43.22" lengthAdjust="spacingAndGlyphs">ERP</text>
<text x="809.30" y="37.50" font-size="19.7" fill="#7f859b" textLength="206.20" lengthAdjust="spacing">Search in Route Master</text>
<text x="1567.80" y="38.25" font-size="21.3" fill="#fff" textLength="212.72" lengthAdjust="spacing">Zylker Tech(Distribut...</text>
<text x="1961.90" y="27.40" font-size="15.2" fill="#fff" textLength="18.80" lengthAdjust="spacing">9+</text>
<text x="29.80" y="125.00" font-size="14.9" fill="#bcc3d8" textLength="39.70" lengthAdjust="spacing">Home</text>
<text x="11.30" y="206.25" font-size="14.9" fill="#cdd3e4" font-weight="700" textLength="76.71" lengthAdjust="spacing">Dashboard</text>
<text x="26.05" y="287.00" font-size="14.9" fill="#bcc3d8" textLength="46.93" lengthAdjust="spacing">People</text>
<text x="30.30" y="367.50" font-size="14.9" fill="#bcc3d8" textLength="38.20" lengthAdjust="spacing">Items</text>
<text x="17.30" y="449.00" font-size="14.9" fill="#bcc3d8" textLength="64.21" lengthAdjust="spacing">Inventory</text>
<text x="31.05" y="529.50" font-size="14.9" fill="#bcc3d8" textLength="36.94" lengthAdjust="spacing">Sales</text>
<text x="9.80" y="610.75" font-size="14.9" fill="#fff" textLength="79.19" lengthAdjust="spacing">Distribution</text>
<text x="17.80" y="693.50" font-size="14.9" fill="#bcc3d8" textLength="63.70" lengthAdjust="spacing">Purchase</text>
<text x="20.30" y="776.25" font-size="14.9" fill="#bcc3d8" textLength="54.72" lengthAdjust="spacing">Travel &amp;</text>
<text x="20.30" y="793.25" font-size="14.9" fill="#bcc3d8" textLength="58.44" lengthAdjust="spacing">Expense</text>
<text x="21.30" y="875.00" font-size="14.9" fill="#bcc3d8" textLength="56.69" lengthAdjust="spacing">Budgets</text>
<text x="22.55" y="956.00" font-size="14.9" fill="#bcc3d8" textLength="53.69" lengthAdjust="spacing">Reports</text>
<text x="122.30" y="101.25" font-size="21.0" fill="#4b5166" textLength="131.22" lengthAdjust="spacing">Sales Regions</text>
<text x="299.98" y="101.25" font-size="21.3" fill="#2a2f44" textLength="126.85" lengthAdjust="spacing" stroke="#2a2f44" stroke-width="0.35" stroke-linejoin="round">Route Master</text>
<text x="473.30" y="101.25" font-size="21.3" fill="#4b5166" textLength="131.69" lengthAdjust="spacing">Journey Plans</text>
<text x="122.30" y="181.25" font-size="23" fill="#1c2136" font-weight="700" textLength="151.98" lengthAdjust="spacing">Active Routes</text>
<text x="167.10" y="258.00" font-size="21.2" fill="#1c2136" textLength="183.89" lengthAdjust="spacing" stroke="#1c2136" stroke-width="0.3" stroke-linejoin="round">Pharma Supply Run</text>
<text x="166.20" y="292.50" font-size="19.3" fill="#5d6378" textLength="78.21" lengthAdjust="spacing">RM-1285</text>
<text x="281.05" y="292.50" font-size="19.4" fill="#5d6378" textLength="106.45" lengthAdjust="spacing">Rajesh Patel</text>
<text x="176.03" y="328.75" font-size="16.6" fill="#0f6a40" textLength="52.26" lengthAdjust="spacing" stroke="#0f6a40" stroke-width="0.45" stroke-linejoin="round">Active</text>
<text x="167.10" y="389.82" font-size="21.3" fill="#1c2136" textLength="230.92" lengthAdjust="spacing" stroke="#1c2136" stroke-width="0.3" stroke-linejoin="round">Bellandur Tech Logistics</text>
<text x="166.20" y="424.32" font-size="19.3" fill="#5d6378" textLength="78.21" lengthAdjust="spacing">RM-4212</text>
<text x="297.55" y="424.32" font-size="19.7" fill="#5d6378" textLength="92.96" lengthAdjust="spacing">Geeta Nair</text>
<text x="176.03" y="460.57" font-size="16.6" fill="#0f6a40" textLength="52.26" lengthAdjust="spacing" stroke="#0f6a40" stroke-width="0.45" stroke-linejoin="round">Active</text>
<text x="167.10" y="521.64" font-size="21.3" fill="#1c2136" textLength="258.89" lengthAdjust="spacing" stroke="#1c2136" stroke-width="0.3" stroke-linejoin="round">Indiranagar Metro Logistics</text>
<text x="166.20" y="556.14" font-size="19.7" fill="#5d6378" textLength="80.21" lengthAdjust="spacing">RM-5783</text>
<text x="301.80" y="556.14" font-size="19.7" fill="#5d6378" textLength="105.65" lengthAdjust="spacing">Arjun Verma</text>
<text x="176.03" y="592.39" font-size="16.6" fill="#0f6a40" textLength="52.26" lengthAdjust="spacing" stroke="#0f6a40" stroke-width="0.45" stroke-linejoin="round">Active</text>
<text x="167.10" y="653.46" font-size="21.3" fill="#1c2136" textLength="237.90" lengthAdjust="spacing" stroke="#1c2136" stroke-width="0.3" stroke-linejoin="round">Vasanth Nagar Deliveries</text>
<text x="166.20" y="687.96" font-size="19.7" fill="#5d6378" textLength="80.71" lengthAdjust="spacing">RM-2356</text>
<text x="294.80" y="687.96" font-size="19.5" fill="#5d6378" textLength="108.68" lengthAdjust="spacing">Divya Kumar</text>
<text x="176.03" y="724.21" font-size="16.6" fill="#0f6a40" textLength="52.26" lengthAdjust="spacing" stroke="#0f6a40" stroke-width="0.45" stroke-linejoin="round">Active</text>
<text x="167.10" y="785.28" font-size="21.3" fill="#1c2136" textLength="243.92" lengthAdjust="spacing" stroke="#1c2136" stroke-width="0.3" stroke-linejoin="round">Electronic City Shipments</text>
<text x="166.20" y="819.78" font-size="19.7" fill="#5d6378" textLength="81.71" lengthAdjust="spacing">RM-9385</text>
<text x="294.80" y="819.78" font-size="19.7" fill="#5d6378" textLength="126.45" lengthAdjust="spacing">Siddharth Nair</text>
<text x="176.03" y="856.03" font-size="16.6" fill="#0f6a40" textLength="52.26" lengthAdjust="spacing" stroke="#0f6a40" stroke-width="0.45" stroke-linejoin="round">Active</text>
<text x="167.10" y="917.10" font-size="21.3" fill="#1c2136" textLength="245.90" lengthAdjust="spacing" stroke="#1c2136" stroke-width="0.3" stroke-linejoin="round">Whitefield Tech Transport</text>
<text x="166.20" y="951.60" font-size="19.7" fill="#5d6378" textLength="81.71" lengthAdjust="spacing">RM-6829</text>
<text x="294.80" y="951.60" font-size="19.5" fill="#5d6378" textLength="117.15" lengthAdjust="spacing">Neha Sharma</text>
<text x="176.03" y="987.85" font-size="16.6" fill="#0f6a40" textLength="52.26" lengthAdjust="spacing" stroke="#0f6a40" stroke-width="0.45" stroke-linejoin="round">Active</text>
<text x="167.10" y="1048.92" font-size="21.3" fill="#1c2136" textLength="249.39" lengthAdjust="spacing" stroke="#1c2136" stroke-width="0.3" stroke-linejoin="round">Richmond Town Deliveries</text>
<text x="166.20" y="1083.42" font-size="19.7" fill="#5d6378" textLength="81.21" lengthAdjust="spacing">RM-3478</text>
<text x="294.80" y="1083.42" font-size="19.7" fill="#5d6378" textLength="112.69" lengthAdjust="spacing">Rohit Kapoor</text>
<text x="176.03" y="1119.67" font-size="16.6" fill="#0f6a40" textLength="52.26" lengthAdjust="spacing" stroke="#0f6a40" stroke-width="0.45" stroke-linejoin="round">Active</text>
<text x="167.10" y="1180.74" font-size="21.3" fill="#1c2136" textLength="216.92" lengthAdjust="spacing" stroke="#1c2136" stroke-width="0.3" stroke-linejoin="round">Jayanagar Retail Route</text>
<text x="166.20" y="1215.24" font-size="19.7" fill="#5d6378" textLength="79.71" lengthAdjust="spacing">RM-8531</text>
<text x="294.80" y="1215.24" font-size="19.7" fill="#5d6378" textLength="104.66" lengthAdjust="spacing">Anjali Gupta</text>
<text x="176.03" y="1251.49" font-size="16.6" fill="#0f6a40" textLength="52.26" lengthAdjust="spacing" stroke="#0f6a40" stroke-width="0.45" stroke-linejoin="round">Active</text>
<text x="634.80" y="183.75" font-size="26.2" fill="#1c2136" font-weight="700" textLength="113.71" lengthAdjust="spacing">RM-1285</text>
<text x="653.70" y="254.25" font-size="21.0" fill="#1c2136" textLength="36.16" lengthAdjust="spacing" stroke="#1c2136" stroke-width="0.3" stroke-linejoin="round">Edit</text>
<text x="768.70" y="254.25" font-size="21.3" fill="#1c2136" textLength="154.91" lengthAdjust="spacing" stroke="#1c2136" stroke-width="0.3" stroke-linejoin="round">Mark as Inactive</text>
<text x="675.55" y="334.50" font-size="18.3" fill="#fff" font-weight="700" textLength="54.93" lengthAdjust="spacing">Active</text>
<text x="660.55" y="398.75" font-size="18" fill="#5d6378" textLength="98.68" lengthAdjust="spacing">Route Name</text>
<text x="1025.55" y="398.75" font-size="18" fill="#5d6378" textLength="103.72" lengthAdjust="spacing">Sales Region</text>
<text x="1475.55" y="398.75" font-size="18" fill="#5d6378" textLength="91.93" lengthAdjust="spacing">Route Type</text>
<text x="660.55" y="438.75" font-size="23.5" fill="#1c2136" font-weight="700" textLength="217.93" lengthAdjust="spacing">Pharma Supply Run</text>
<text x="1025.75" y="438.75" font-size="24.6" fill="#1c2136" textLength="186.57" lengthAdjust="spacing" stroke="#1c2136" stroke-width="0.4" stroke-linejoin="round">Mumbai Intercity</text>
<text x="1475.75" y="438.75" font-size="24.6" fill="#1c2136" textLength="131.06" lengthAdjust="spacing" stroke="#1c2136" stroke-width="0.4" stroke-linejoin="round">Sales Route</text>
<text x="673.80" y="544.50" font-size="20.8" fill="#1c2136" font-weight="700" textLength="218.45" lengthAdjust="spacing">Associated Customers</text>
<text x="934.80" y="544.50" font-size="21.3" fill="#3a4056" textLength="241.93" lengthAdjust="spacing">Associated Journey Plans</text>
<text x="1218.80" y="544.50" font-size="21.3" fill="#3a4056" textLength="111.72" lengthAdjust="spacing">Activity Log</text>
<text x="674.30" y="634.50" font-size="23" fill="#1c2136" font-weight="700" textLength="273.73" lengthAdjust="spacing">Associated Customer (6)</text>
<text x="1750.45" y="632.50" font-size="17.0" fill="#1c2136" textLength="26.42" lengthAdjust="spacing" stroke="#1c2136" stroke-width="0.3" stroke-linejoin="round">List</text>
<text x="1840.95" y="632.50" font-size="16.6" fill="#1c2136" textLength="32.66" lengthAdjust="spacing" stroke="#1c2136" stroke-width="0.3" stroke-linejoin="round">Map</text>
<text x="1783.45" y="715.75" font-size="15.8" fill="#3c4258" textLength="105.16" lengthAdjust="spacing" stroke="#3c4258" stroke-width="0.3" stroke-linejoin="round">Click to Expand</text>
</svg>
</body></html>
